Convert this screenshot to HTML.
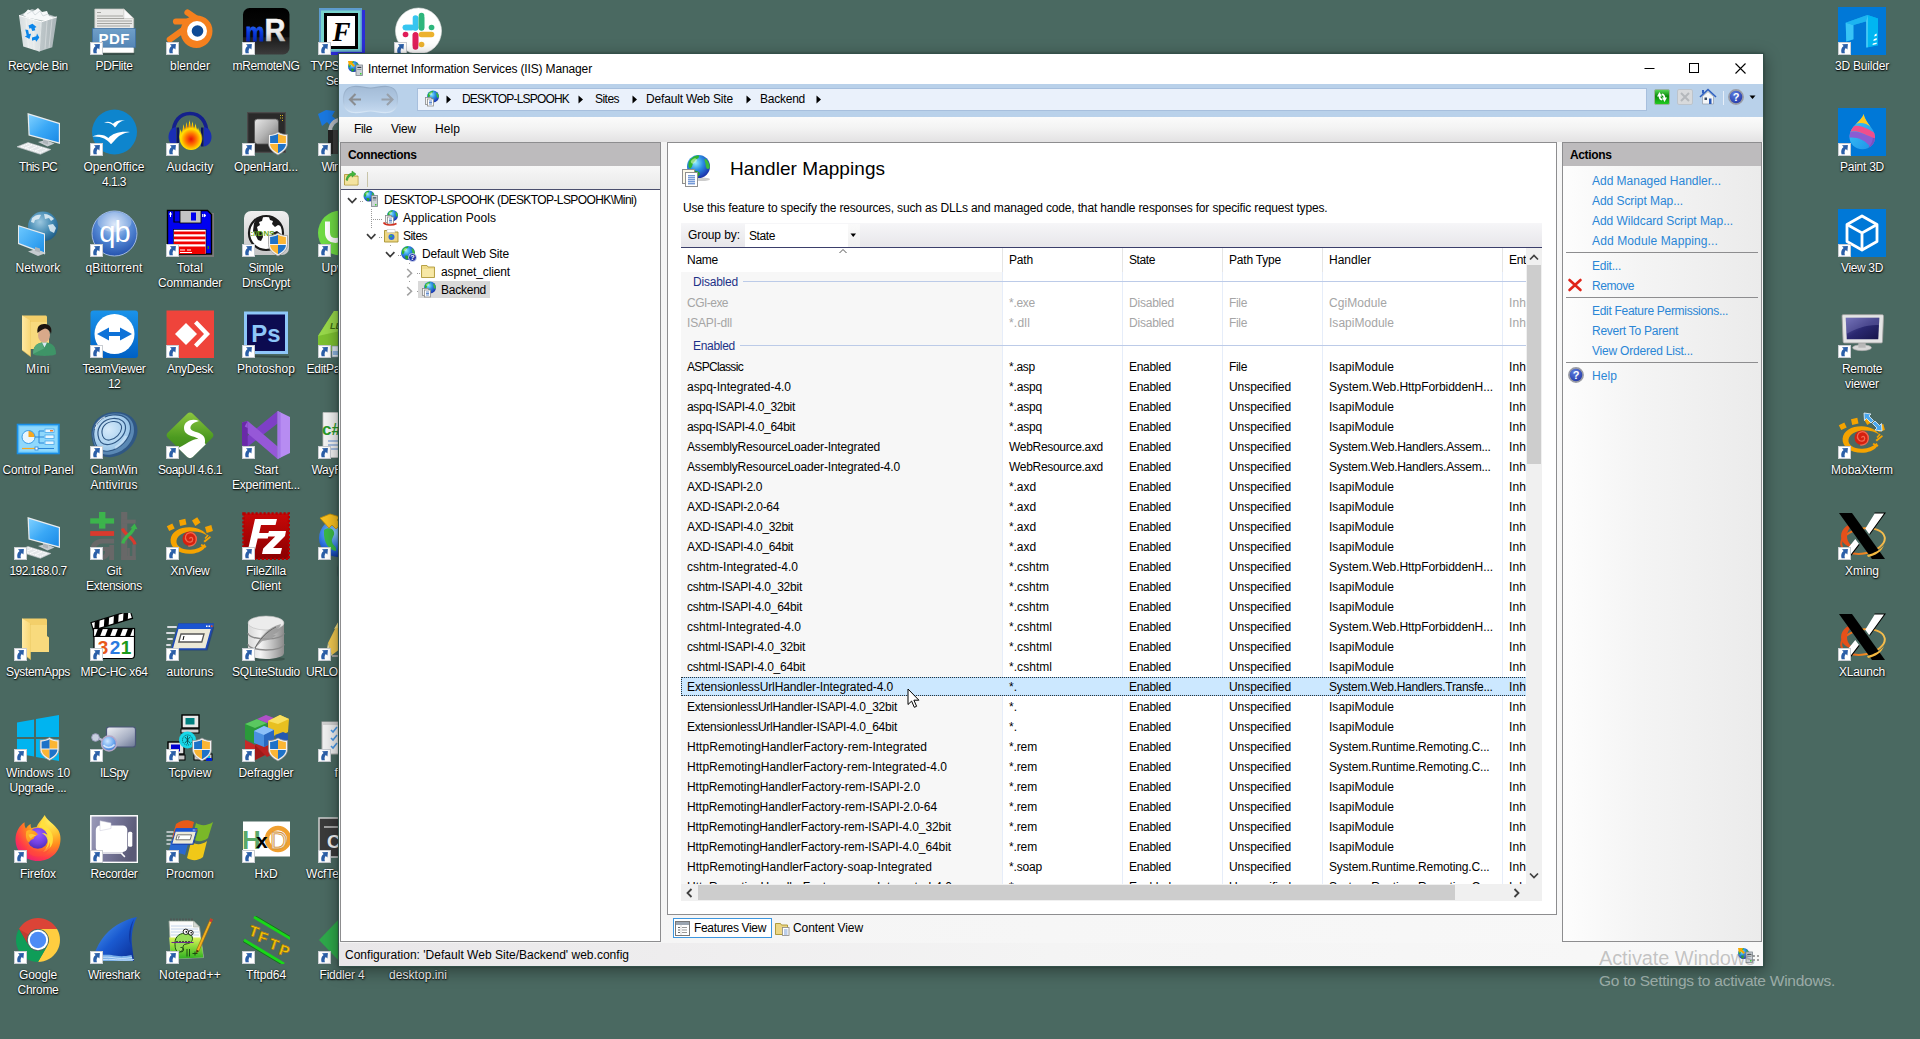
<!DOCTYPE html>
<html lang="en"><head><meta charset="utf-8"><title>Internet Information Services (IIS) Manager</title>
<style>
html,body{margin:0;padding:0;}
body{width:1920px;height:1039px;overflow:hidden;background:#4a6961;font-family:"Liberation Sans",sans-serif;font-size:12px;color:#000;}
#screen{position:relative;width:1920px;height:1039px;overflow:hidden;background:#4a6961;}
.t{position:absolute;white-space:nowrap;line-height:16px;}
.lbl{position:absolute;width:120px;text-align:center;color:#fff;line-height:15px;text-shadow:0 1px 1px rgba(0,0,0,.75),0 0 2px rgba(0,0,0,.55),1px 1px 2px rgba(0,0,0,.5);white-space:nowrap;}
.a{color:#2a86d6;}
.dis{color:#a9a9a9;}

</style></head>
<body>
<div id="screen">
<svg width="0" height="0" style="position:absolute"><defs><radialGradient id="gl16" cx=".38" cy=".34" r=".75"><stop offset="0" stop-color="#8aeaff"/><stop offset=".42" stop-color="#2c8ee2"/><stop offset=".85" stop-color="#1c3cb4"/><stop offset="1" stop-color="#16288a"/></radialGradient></defs></svg>
<svg style="position:absolute;left:14px;top:7px;overflow:hidden" width="48" height="48" viewBox="0 0 48 48"><defs><linearGradient id="rb1" x1="0" y1="0" x2="1" y2="0"><stop offset="0" stop-color="#dfe4e7"/><stop offset=".5" stop-color="#f3f5f6"/><stop offset="1" stop-color="#e2e6e9"/></linearGradient>
<linearGradient id="rb2" x1="0" y1="0" x2="1" y2="0"><stop offset="0" stop-color="#cdd3d7"/><stop offset="1" stop-color="#b4bcc1"/></linearGradient></defs>
<path d="M5 8.500L18 2l24.900 7.900-15.600 5z" fill="#c4ccd0" opacity=".8"/>
<path d="M9 8l5-5.500 5 2L24 1l4 4 5-1 2 5 5 1-8 4-9-1.500-10-2z" fill="#f7f9fa"/><path d="M13 7l5-3 3 4 5-4 3 5 5-2" fill="none" stroke="#d3d9dd" stroke-width=".9"/>
<path d="M27.300 14.800L42.900 9.900 38.300 40.300 25.200 44.600z" fill="url(#rb2)" opacity=".9"/>
<path d="M5 8.500l22.300 6.300-2.100 29.800L9.200 39.600z" fill="url(#rb1)" opacity=".94"/>
<path d="M5 8.500l22.300 6.300L42.900 9.900" fill="none" stroke="#fff" stroke-width="1"/><path d="M27.300 14.800l-2.100 29.800" stroke="#eef1f2" stroke-width=".8"/>
<path d="M12 12l2.500 29M19.500 14l.5 29M33 14l-2 28M38 12l-3 29" stroke="#fff" stroke-opacity=".5" stroke-width=".7"/>
<g fill="#0c86ea"><path d="M14.500 18.500l4-1.800 4 3.300-1.800 1 .6 2.200-3 .8-1.200-3-1.600.8z"/><path d="M11.300 22.500l2.800.6.800 3.800 2.200-.2-1.700 5.200-4.500-2.500 1.800-.8z"/><path d="M18 30.500l4.300-1.300.7-2.800 2.300 4.200-3 4.200-1-2-3.300 1z"/></g></svg>
<div class="lbl" style="left:-22px;top:59px;width:120px"><span style="letter-spacing:-0.305px">Recycle Bin</span></div>
<svg style="position:absolute;left:90px;top:7px;overflow:hidden" width="48" height="48" viewBox="0 0 48 48"><defs><linearGradient id="pd1" x1="0" y1="0" x2="0" y2="1"><stop offset="0" stop-color="#6f9fc8"/><stop offset="1" stop-color="#5586b6"/></linearGradient></defs>
<path d="M6 47.200l38.500-.4" stroke="#000" stroke-opacity=".28" stroke-width="2"/>
<path d="M4.800 2h29l9.900 9.500v34.100H4.800z" fill="#e9e9e7" stroke="#c4c4c0" stroke-width=".7"/>
<path d="M33.800 2v9.500h9.900z" fill="#fafafa" stroke="#bdbdb8" stroke-width=".6"/>
<g stroke="#a4a4a0" stroke-width="1"><path d="M7 5.500h4M7 9h26M7 11.500h27M7 14h35M7 16.500h35M7 19h33"/></g>
<rect x="2.600" y="21.600" width="42.900" height="18.700" fill="url(#pd1)" stroke="#3f72a6" stroke-width=".8"/>
<rect x="5.200" y="40.700" width="38.200" height="4.700" fill="#fff"/>
<text x="24.200" y="36.800" font-family="Liberation Sans,sans-serif" font-weight="bold" font-size="15" fill="#fff" text-anchor="middle" letter-spacing=".5">PDF</text></svg>
<svg style="position:absolute;left:90px;top:42px" width="13" height="13" viewBox="0 0 13 13"><rect x=".5" y=".5" width="12" height="12" fill="#fff" stroke="#c9cdd2"/><path d="M9.900 1.900l-.5 5.700-1.600-1.600C6.600 7.200 6.300 9 6.900 11.200H3.600C2.600 8 3.500 5.300 5.600 3.900L4 2.300z" fill="#2b5fa8"/></svg>
<div class="lbl" style="left:54px;top:59px;width:120px"><span style="letter-spacing:-0.334px">PDFlite</span></div>
<svg style="position:absolute;left:166px;top:7px;overflow:hidden" width="48" height="48" viewBox="0 0 48 48"><g fill="none" stroke="#f5801e" stroke-linecap="round" stroke-width="6.200"><path d="M10 14.500h18"/><path d="M21.500 5.500L34 14"/><path d="M3.800 32.500L24 18"/></g>
<path d="M30.500 8.500c9 0 16 6.500 16 15.500S39.500 41 30.500 41 14.500 33.500 14.500 24.500s7-16 16-16z" fill="#f5801e"/>
<circle cx="31" cy="24" r="10" fill="#fff"/><circle cx="31.500" cy="24" r="5.800" fill="#0d4a96"/></svg>
<svg style="position:absolute;left:166px;top:42px" width="13" height="13" viewBox="0 0 13 13"><rect x=".5" y=".5" width="12" height="12" fill="#fff" stroke="#c9cdd2"/><path d="M9.900 1.900l-.5 5.700-1.600-1.600C6.600 7.200 6.300 9 6.900 11.200H3.600C2.600 8 3.500 5.300 5.600 3.900L4 2.300z" fill="#2b5fa8"/></svg>
<div class="lbl" style="left:130px;top:59px;width:120px"><span style="letter-spacing:-0.004px">blender</span></div>
<svg style="position:absolute;left:242px;top:7px;overflow:hidden" width="48" height="48" viewBox="0 0 48 48"><defs><linearGradient id="mr1" x1="0" y1="0" x2="0" y2="1"><stop offset="0" stop-color="#000"/><stop offset=".62" stop-color="#0a0a0a"/><stop offset=".64" stop-color="#1c1c1c"/><stop offset="1" stop-color="#3c3c3c"/></linearGradient>
<linearGradient id="mr2" x1="0" y1="0" x2="0" y2="1"><stop offset="0" stop-color="#4d8dff"/><stop offset=".5" stop-color="#0a3ee0"/><stop offset="1" stop-color="#001a9c"/></linearGradient>
<linearGradient id="mr3" x1="0" y1="0" x2="0" y2="1"><stop offset="0" stop-color="#fff"/><stop offset=".6" stop-color="#e8e8e8"/><stop offset="1" stop-color="#8a8a8a"/></linearGradient></defs>
<rect x="1" y="1" width="46.500" height="46.500" rx="6.500" fill="url(#mr1)"/>
<text x="3.500" y="34" font-family="Liberation Sans,sans-serif" font-weight="bold" font-size="25" fill="url(#mr2)" stroke="url(#mr2)" stroke-width=".8" textLength="19" lengthAdjust="spacingAndGlyphs">m</text>
<text x="22.500" y="34" font-family="Liberation Sans,sans-serif" font-weight="bold" font-size="32" fill="url(#mr3)" stroke="url(#mr3)" stroke-width=".5" textLength="21" lengthAdjust="spacingAndGlyphs">R</text></svg>
<svg style="position:absolute;left:242px;top:42px" width="13" height="13" viewBox="0 0 13 13"><rect x=".5" y=".5" width="12" height="12" fill="#fff" stroke="#c9cdd2"/><path d="M9.900 1.900l-.5 5.700-1.600-1.600C6.600 7.200 6.300 9 6.900 11.200H3.600C2.600 8 3.500 5.300 5.600 3.900L4 2.300z" fill="#2b5fa8"/></svg>
<div class="lbl" style="left:206px;top:59px;width:120px"><span style="letter-spacing:-0.335px">mRemoteNG</span></div>
<svg style="position:absolute;left:318px;top:7px;overflow:hidden" width="48" height="48" viewBox="0 0 48 48"><rect x="4" y="3" width="43" height="45" fill="#2c2cd8"/><rect x="1" y="1" width="43" height="44" fill="#5d9bcf"/><rect x="3" y="3.500" width="39.500" height="40" fill="#78d4cc"/>
<rect x="7.500" y="7.500" width="31" height="33" fill="#fff" stroke="#000" stroke-width="3"/>
<text x="23.500" y="34" font-family="Liberation Serif,serif" font-style="italic" font-weight="bold" font-size="27" fill="#000" text-anchor="middle">F</text></svg>
<svg style="position:absolute;left:318px;top:42px" width="13" height="13" viewBox="0 0 13 13"><rect x=".5" y=".5" width="12" height="12" fill="#fff" stroke="#c9cdd2"/><path d="M9.900 1.900l-.5 5.700-1.600-1.600C6.600 7.200 6.300 9 6.900 11.200H3.600C2.600 8 3.500 5.300 5.600 3.900L4 2.300z" fill="#2b5fa8"/></svg>
<div class="lbl" style="left:282px;top:59px;width:120px"><span style="letter-spacing:-0.698px">TYPSoft FTP</span><br><span style="letter-spacing:-0.557px">Server</span></div>
<svg style="position:absolute;left:394px;top:7px;overflow:hidden" width="48" height="48" viewBox="0 0 48 48"><circle cx="24.500" cy="24" r="23" fill="#fff"/><circle cx="24.500" cy="24" r="23" fill="none" stroke="#e8e8e8" stroke-width=".6"/>
<g stroke-linecap="round" stroke-width="5.600" fill="none"><path d="M21.500 11v10" stroke="#36c5f0"/><path d="M11.500 20.500h6" stroke="#36c5f0"/><path d="M11.500 20.500h10" stroke="#36c5f0"/>
<path d="M27.500 11v10" stroke="#2eb67d"/><path d="M37.500 20.500h.1" stroke="#2eb67d"/><path d="M27.500 8.500v12" stroke="#2eb67d"/>
<path d="M21.500 28v10" stroke="#e01e5a"/><path d="M11.500 27.500h.1" stroke="#e01e5a"/><path d="M21.500 28v12" stroke="#e01e5a"/>
<path d="M27.500 27.500h10" stroke="#ecb22e"/><path d="M27.500 37.500h.1" stroke="#ecb22e"/></g></svg>
<svg style="position:absolute;left:394px;top:42px" width="13" height="13" viewBox="0 0 13 13"><rect x=".5" y=".5" width="12" height="12" fill="#fff" stroke="#c9cdd2"/><path d="M9.900 1.900l-.5 5.700-1.600-1.600C6.600 7.200 6.300 9 6.900 11.200H3.600C2.600 8 3.500 5.300 5.600 3.900L4 2.300z" fill="#2b5fa8"/></svg>
<div class="lbl" style="left:358px;top:59px;width:120px"><span style="letter-spacing:-0.469px">Slack</span></div>
<svg style="position:absolute;left:14px;top:108px;overflow:hidden" width="48" height="48" viewBox="0 0 48 48"><defs><linearGradient id="pca" x1="0" y1="0" x2="1" y2="1"><stop offset="0" stop-color="#7fd0ff"/><stop offset=".5" stop-color="#3aa8f6"/><stop offset="1" stop-color="#1b8ae6"/></linearGradient></defs>
<path d="M3 38.800l11-4.300 22.800 7L26.400 46.300z" fill="#e4e7e9" stroke="#c9cdd0" stroke-width=".6"/>
<path d="M7 38.600l7.500-3 18.500 5.700-7 3.200z" fill="none" stroke="#fff" stroke-width=".9" stroke-dasharray="1.600 1"/><path d="M11 40l7-3M16 41.500l7-3.200M21 43l7-3.300" stroke="#fff" stroke-width=".8"/>
<path d="M24 34l8-2 8.500 3.500-7 3z" fill="#c6cbcf"/><path d="M29 29l5 1.500v6l-5-1.500z" fill="#aeb4b9"/>
<path d="M13.500 5l32.500 10v21L14.500 27.500z" fill="#e9ecee"/><path d="M14.800 6.800l30 9.300v18.200L15.700 26.500z" fill="url(#pca)"/></svg>
<div class="lbl" style="left:-22px;top:160px;width:120px"><span style="letter-spacing:-0.668px">This PC</span></div>
<svg style="position:absolute;left:90px;top:108px;overflow:hidden" width="48" height="48" viewBox="0 0 48 48"><circle cx="24.500" cy="24" r="22.500" fill="#0e85cd"/>
<path d="M14 15c3-2.200 6.500-1.500 9 .8 2-2.600 6-4.200 12-3.500-3.500.5-6.500 2.300-8.500 5.500l-1.500 1.700c-2.500-3.700-6-5.200-11-4.500z" fill="#fff"/>
<path d="M2.500 28.500c5.500-3 12-2 16 1.500 4-4.500 11-7 21.500-6-7 1-12 4-15.500 8.500l-3.500 3.800c-4-5.500-10-8.300-18.500-7.800z" fill="#fff"/></svg>
<svg style="position:absolute;left:90px;top:143px" width="13" height="13" viewBox="0 0 13 13"><rect x=".5" y=".5" width="12" height="12" fill="#fff" stroke="#c9cdd2"/><path d="M9.900 1.900l-.5 5.700-1.600-1.600C6.600 7.200 6.300 9 6.900 11.200H3.600C2.600 8 3.500 5.300 5.600 3.900L4 2.300z" fill="#2b5fa8"/></svg>
<div class="lbl" style="left:54px;top:160px;width:120px"><span style="letter-spacing:0.052px">OpenOffice</span><br><span style="letter-spacing:-0.538px">4.1.3</span></div>
<svg style="position:absolute;left:166px;top:108px;overflow:hidden" width="48" height="48" viewBox="0 0 48 48"><defs><radialGradient id="au1" cx=".5" cy=".55" r=".55"><stop offset="0" stop-color="#e81008"/><stop offset=".45" stop-color="#ff7a00"/><stop offset=".8" stop-color="#ffe000"/><stop offset="1" stop-color="#ffe000" stop-opacity=".0"/></radialGradient></defs>
<path d="M7 27C7 13 14 5.500 24 5.500S41 13 41 27" fill="none" stroke="#14208c" stroke-width="3.600"/>
<path d="M10 19c-5 1-7.500 5-7.500 10s3 9 8 9.500z" fill="#1a2eb4"/><path d="M38 19c5 1 7.500 5 7.500 10s-3 9-8 9.500z" fill="#1a2eb4"/>
<path d="M10.500 19.500h2.500v19h-2.500zM35 19.500h2.500v19H35z" fill="#0a1460"/>
<path d="M13 29l1.500-8 1.500 5 1.500-10 1.500 7 1.500-9 1.500 8 1.500-11 1.500 10 1.500-8 1.500 9 1.500-7 1.500 8 1.500-4 1 10-1 7-1.500-4-1.500 6-1.500-5-1.500 6-1.500-6-1.500 7-1.500-7-1.500 6-1.500-6-1.500 5-1.500-6-1.500 3z" fill="url(#au1)"/>
<ellipse cx="25" cy="30" rx="11.500" ry="12" fill="url(#au1)"/></svg>
<svg style="position:absolute;left:166px;top:143px" width="13" height="13" viewBox="0 0 13 13"><rect x=".5" y=".5" width="12" height="12" fill="#fff" stroke="#c9cdd2"/><path d="M9.900 1.900l-.5 5.700-1.600-1.600C6.600 7.200 6.300 9 6.900 11.200H3.600C2.600 8 3.500 5.300 5.600 3.900L4 2.300z" fill="#2b5fa8"/></svg>
<div class="lbl" style="left:130px;top:160px;width:120px"><span style="letter-spacing:0.122px">Audacity</span></div>
<svg style="position:absolute;left:242px;top:108px;overflow:hidden" width="48" height="48" viewBox="0 0 48 48"><defs><linearGradient id="oh1" x1="0" y1="0" x2="1" y2="1"><stop offset="0" stop-color="#e8e8e8"/><stop offset=".5" stop-color="#b4b4b4"/><stop offset="1" stop-color="#6e6e6e"/></linearGradient></defs>
<rect x="5.500" y="4.500" width="38" height="40" fill="#333" stroke="#4a4a4a" stroke-width="1"/><rect x="7" y="6" width="35" height="37" fill="#2a2a2a"/>
<rect x="12.500" y="11" width="24" height="25" rx="3" fill="url(#oh1)" stroke="#555" stroke-width=".8"/>
<g fill="#d8b820"><rect x="38" y="7" width="1" height="1"/><rect x="40" y="7" width="1" height="1"/><rect x="38" y="9.500" width="1" height="1"/><rect x="40" y="9.500" width="1" height="1"/><rect x="40" y="12" width="1" height="1"/></g><g transform="translate(26,24)"><path d="M10 0c3 2 6 2.500 9.500 2.500v9c0 5-4 8.500-9.500 11.500C4.500 20 .5 16.500.5 11.500v-9C4 2.500 7 2 10 0z" fill="#f2f2f2" stroke="#8c8c8c" stroke-width=".7"/><path d="M10 1.800c2.600 1.600 5.200 2 7.900 2.100V11H10z" fill="#fbb534"/><path d="M10 1.800C7.400 3.400 4.800 3.800 2.100 3.900V11H10z" fill="#1e72c8"/><path d="M2.100 12h7.900v9.200C5.600 18.700 2.300 16 2.100 12z" fill="#fbb534"/><path d="M17.900 12H10v9.200c4.400-2.500 7.700-5.200 7.900-9.200z" fill="#1e72c8"/></g></svg>
<svg style="position:absolute;left:242px;top:143px" width="13" height="13" viewBox="0 0 13 13"><rect x=".5" y=".5" width="12" height="12" fill="#fff" stroke="#c9cdd2"/><path d="M9.900 1.900l-.5 5.700-1.600-1.600C6.600 7.200 6.300 9 6.900 11.200H3.600C2.600 8 3.500 5.300 5.600 3.900L4 2.300z" fill="#2b5fa8"/></svg>
<div class="lbl" style="left:206px;top:160px;width:120px"><span style="letter-spacing:-0.124px">OpenHard...</span></div>
<svg style="position:absolute;left:318px;top:108px;overflow:hidden" width="48" height="48" viewBox="0 0 48 48"><path d="M0 6l8-4 9 1-3 5 6 5-6 6-5-5-5 4z" fill="#1a78e0"/><path d="M12 24c0-8 5-12 10-12" fill="none" stroke="#b8bcc0" stroke-width="4"/>
<rect x="10" y="22" width="14" height="24" rx="2" fill="#3a3a3a"/><rect x="10" y="22" width="5" height="24" fill="#222"/></svg>
<svg style="position:absolute;left:318px;top:143px" width="13" height="13" viewBox="0 0 13 13"><rect x=".5" y=".5" width="12" height="12" fill="#fff" stroke="#c9cdd2"/><path d="M9.900 1.900l-.5 5.700-1.600-1.600C6.600 7.200 6.300 9 6.900 11.200H3.600C2.600 8 3.500 5.300 5.600 3.900L4 2.300z" fill="#2b5fa8"/></svg>
<div class="lbl" style="left:282px;top:160px;width:120px"><span style="letter-spacing:-0.723px">WinSCP</span></div>
<svg style="position:absolute;left:14px;top:209px;overflow:hidden" width="48" height="48" viewBox="0 0 48 48"><defs><radialGradient id="nw1" cx=".4" cy=".35" r=".7"><stop offset="0" stop-color="#9cc8e0"/><stop offset=".6" stop-color="#3f86b0"/><stop offset="1" stop-color="#1e5a84"/></radialGradient>
<linearGradient id="nw2" x1="0" y1="0" x2="1" y2="1"><stop offset="0" stop-color="#6cc8ff"/><stop offset="1" stop-color="#1c90ea"/></linearGradient></defs>
<circle cx="29" cy="17.500" r="15" fill="url(#nw1)"/>
<path d="M18 9c3-3 7-4 9-3l-2 4-4 1-1 3-3-1zM30 5c4 0 8 2 10 5l-3 2-2-3-4 1zM34 16l5-1 3 4-2 5-4-2z" fill="#e4f0f6" opacity=".85"/>
<path d="M4 16l27 8.500v21L4 35z" fill="#e6eaed"/><path d="M5 17.500l25 8v18L5 34z" fill="url(#nw2)"/>
<path d="M14 42.500l8-2.500 10 4-8 3z" fill="#c6cbcf"/><path d="M21 38l5 1.500v4L21 42z" fill="#aeb4b9"/></svg>
<div class="lbl" style="left:-22px;top:261px;width:120px"><span style="letter-spacing:0.141px">Network</span></div>
<svg style="position:absolute;left:90px;top:209px;overflow:hidden" width="48" height="48" viewBox="0 0 48 48"><defs><radialGradient id="qb1" cx=".5" cy=".3" r=".75"><stop offset="0" stop-color="#cfe0f8"/><stop offset=".45" stop-color="#5b8fd8"/><stop offset="1" stop-color="#1d4aa8"/></radialGradient></defs>
<circle cx="24.500" cy="24.500" r="22.500" fill="url(#qb1)" stroke="#9fb8e0" stroke-width="1"/>
<ellipse cx="24.500" cy="13" rx="17" ry="10" fill="#fff" opacity=".28"/>
<text x="24.500" y="33" font-family="Liberation Sans,sans-serif" font-size="29" fill="#fff" text-anchor="middle" letter-spacing="-1">qb</text></svg>
<svg style="position:absolute;left:90px;top:244px" width="13" height="13" viewBox="0 0 13 13"><rect x=".5" y=".5" width="12" height="12" fill="#fff" stroke="#c9cdd2"/><path d="M9.900 1.900l-.5 5.700-1.600-1.600C6.600 7.200 6.300 9 6.900 11.200H3.600C2.600 8 3.500 5.300 5.600 3.900L4 2.300z" fill="#2b5fa8"/></svg>
<div class="lbl" style="left:54px;top:261px;width:120px"><span style="letter-spacing:0.149px">qBittorrent</span></div>
<svg style="position:absolute;left:166px;top:209px;overflow:hidden" width="48" height="48" viewBox="0 0 48 48"><rect x="5" y="4" width="43" height="44" fill="#7a7a7a"/><path d="M1.500 1.500h40l4 4v39.500h-44z" fill="#0000f0" stroke="#000" stroke-width="1.400"/>
<rect x="14" y="1.500" width="21" height="12.500" fill="#c4c4c4" stroke="#000" stroke-width=".8"/><rect x="25" y="3.500" width="5" height="8" fill="#0000f0"/>
<path d="M8 2v11h6" fill="none" stroke="#000" stroke-width="1.200"/><path d="M4.500 3v5M3 5h3" stroke="#fff" stroke-width="1"/><path d="M36.500 5v3M38 5v3l2-1.500z" stroke="#fff" fill="#fff" stroke-width=".8"/>
<rect x="7.500" y="20.500" width="32.500" height="24.500" fill="#fff" stroke="#000" stroke-width=".6"/>
<g fill="#f00000"><rect x="8" y="22.500" width="31.500" height="2.800"/><rect x="8" y="27.500" width="31.500" height="2.800"/><rect x="8" y="32.500" width="31.500" height="2.800"/><rect x="8" y="37.500" width="31.500" height="7.500"/></g>
<path d="M14 41h5M21 41h4M14 43.500h12" stroke="#fff" stroke-width="1"/><rect x="41.500" y="37" width="1.500" height="3" fill="#208020"/></svg>
<svg style="position:absolute;left:166px;top:244px" width="13" height="13" viewBox="0 0 13 13"><rect x=".5" y=".5" width="12" height="12" fill="#fff" stroke="#c9cdd2"/><path d="M9.900 1.900l-.5 5.700-1.600-1.600C6.600 7.200 6.300 9 6.900 11.200H3.600C2.600 8 3.500 5.300 5.600 3.900L4 2.300z" fill="#2b5fa8"/></svg>
<div class="lbl" style="left:130px;top:261px;width:120px"><span style="letter-spacing:0.13px">Total</span><br><span style="letter-spacing:-0.225px">Commander</span></div>
<svg style="position:absolute;left:242px;top:209px;overflow:hidden" width="48" height="48" viewBox="0 0 48 48"><defs><linearGradient id="dc1" x1="0" y1="0" x2="0" y2="1"><stop offset="0" stop-color="#f0f0f0"/><stop offset="1" stop-color="#c4c4c4"/></linearGradient></defs>
<rect x="2" y="2" width="45" height="44" rx="7" fill="url(#dc1)"/>
<circle cx="24" cy="24" r="17" fill="#fff" stroke="#1a1a1a" stroke-width="2.200"/>
<path d="M12 14c2-4 6-6 9-6l-1 4-3 1 1 3-3 2 1 4 4 1 1 5-2 4-3-1-3-6-2-3zM27 8c5 0 10 4 12 9l-3-1-3 2-3-3 1-3-3-1zM30 24l5-2 4 3-2 8-5 3-1-5-2-3z" fill="#1a1a1a"/>
<text x="20.500" y="27" font-family="Liberation Sans,sans-serif" font-weight="bold" font-size="8" fill="#6aa820" text-anchor="middle">://DNS</text><g transform="translate(26,24)"><path d="M10 0c3 2 6 2.500 9.500 2.500v9c0 5-4 8.500-9.500 11.500C4.500 20 .5 16.500.5 11.500v-9C4 2.500 7 2 10 0z" fill="#f2f2f2" stroke="#8c8c8c" stroke-width=".7"/><path d="M10 1.800c2.600 1.600 5.200 2 7.900 2.100V11H10z" fill="#fbb534"/><path d="M10 1.800C7.400 3.400 4.800 3.800 2.100 3.900V11H10z" fill="#1e72c8"/><path d="M2.100 12h7.900v9.200C5.600 18.700 2.300 16 2.100 12z" fill="#fbb534"/><path d="M17.900 12H10v9.200c4.400-2.500 7.700-5.200 7.900-9.200z" fill="#1e72c8"/></g></svg>
<svg style="position:absolute;left:242px;top:244px" width="13" height="13" viewBox="0 0 13 13"><rect x=".5" y=".5" width="12" height="12" fill="#fff" stroke="#c9cdd2"/><path d="M9.900 1.900l-.5 5.700-1.600-1.600C6.600 7.200 6.300 9 6.900 11.200H3.600C2.600 8 3.500 5.300 5.600 3.900L4 2.300z" fill="#2b5fa8"/></svg>
<div class="lbl" style="left:206px;top:261px;width:120px"><span style="letter-spacing:-0.28px">Simple</span><br><span style="letter-spacing:-0.251px">DnsCrypt</span></div>
<svg style="position:absolute;left:318px;top:209px;overflow:hidden" width="48" height="48" viewBox="0 0 48 48"><circle cx="22.500" cy="24" r="22.500" fill="#6fda44"/><path d="M9.500 12.500v11c0 5 3.200 8 8 8s8-3 8-8v-11" fill="none" stroke="#fff" stroke-width="5"/></svg>
<svg style="position:absolute;left:318px;top:244px" width="13" height="13" viewBox="0 0 13 13"><rect x=".5" y=".5" width="12" height="12" fill="#fff" stroke="#c9cdd2"/><path d="M9.900 1.900l-.5 5.700-1.600-1.600C6.600 7.200 6.300 9 6.900 11.200H3.600C2.600 8 3.500 5.300 5.600 3.900L4 2.300z" fill="#2b5fa8"/></svg>
<div class="lbl" style="left:282px;top:261px;width:120px"><span style="letter-spacing:0.054px">Upwork</span></div>
<svg style="position:absolute;left:14px;top:310px;overflow:hidden" width="48" height="48" viewBox="0 0 48 48"><defs><linearGradient id="foa" x1="0" y1="0" x2="1" y2="0"><stop offset="0" stop-color="#ffe9a2"/><stop offset="1" stop-color="#f8d775"/></linearGradient></defs>
<path d="M8 5.500h23.500c.8 0 1.500.7 1.500 1.500v16l2 1.500V39H8z" fill="#f3cf6a"/>
<path d="M8 5.500l8.500 5v36L8 40z" fill="url(#foa)"/><path d="M16.500 10.500v36L8 40" fill="none" stroke="#e6c25a" stroke-width=".6"/>
<path d="M16.500 12H33v11.500l2 1.500V39H16.500z" fill="#f8da80" opacity=".9"/><path d="M19 44c0-7 3-10.500 9-11.500h5c6 1 9 4.500 9 11.500-2 2.500-21 2.500-23 0z" fill="#3e9467"/><path d="M19 44c0-7 3-10.500 9-11.500l2 6z" fill="#55a87a"/>
<path d="M28 32.500l2.500 5 2.500-5z" fill="#d8e8f0"/><ellipse cx="30" cy="25" rx="6" ry="7.500" fill="#d8a98a"/><path d="M23.500 23c-1-7 3-9.500 7.500-9 5 .5 7.500 4 6 10-1-3.500-3-5-6-5.500-2.500 1-5 2-7.500 4.500z" fill="#1c1410"/></svg>
<div class="lbl" style="left:-22px;top:362px;width:120px"><span style="letter-spacing:0.5px">Mini</span></div>
<svg style="position:absolute;left:90px;top:310px;overflow:hidden" width="48" height="48" viewBox="0 0 48 48"><defs><linearGradient id="tv1" x1="0" y1="0" x2="0" y2="1"><stop offset="0" stop-color="#1a93ea"/><stop offset="1" stop-color="#0060c4"/></linearGradient></defs>
<rect x=".5" y=".5" width="47.500" height="47.500" rx="3" fill="url(#tv1)"/><circle cx="24.500" cy="24" r="20" fill="#fff"/>
<path d="M7 24l12-6.500v4.500h11v-4.500L42 24l-12 6.500V26H19v4.500z" fill="#0e72d8"/></svg>
<svg style="position:absolute;left:90px;top:345px" width="13" height="13" viewBox="0 0 13 13"><rect x=".5" y=".5" width="12" height="12" fill="#fff" stroke="#c9cdd2"/><path d="M9.900 1.900l-.5 5.700-1.600-1.600C6.600 7.200 6.300 9 6.900 11.200H3.600C2.600 8 3.500 5.300 5.600 3.900L4 2.300z" fill="#2b5fa8"/></svg>
<div class="lbl" style="left:54px;top:362px;width:120px"><span style="letter-spacing:-0.281px">TeamViewer</span><br><span style="letter-spacing:-0.674px">12</span></div>
<svg style="position:absolute;left:166px;top:310px;overflow:hidden" width="48" height="48" viewBox="0 0 48 48"><rect x=".5" y=".5" width="47.500" height="47.500" fill="#ef443b"/><path d="M20 13l11 11-11 11L9 24z" fill="#fff"/><path d="M28 13.500l3-3 13 13.500-13 13.500-3-3L38 24z" fill="#fff"/></svg>
<svg style="position:absolute;left:166px;top:345px" width="13" height="13" viewBox="0 0 13 13"><rect x=".5" y=".5" width="12" height="12" fill="#fff" stroke="#c9cdd2"/><path d="M9.900 1.900l-.5 5.700-1.600-1.600C6.600 7.200 6.300 9 6.900 11.200H3.600C2.600 8 3.500 5.300 5.600 3.900L4 2.300z" fill="#2b5fa8"/></svg>
<div class="lbl" style="left:130px;top:362px;width:120px"><span style="letter-spacing:-0.288px">AnyDesk</span></div>
<svg style="position:absolute;left:242px;top:310px;overflow:hidden" width="48" height="48" viewBox="0 0 48 48"><path d="M3 46l44 1" stroke="#000" stroke-opacity=".3" stroke-width="2"/><rect x="2" y="1.500" width="44" height="42.500" fill="#8ec6f8"/><rect x="5" y="4.500" width="38" height="36.500" fill="#0c0b50"/>
<text x="24" y="32" font-family="Liberation Sans,sans-serif" font-weight="bold" font-size="24" fill="#8ec6f8" text-anchor="middle">Ps</text></svg>
<svg style="position:absolute;left:242px;top:345px" width="13" height="13" viewBox="0 0 13 13"><rect x=".5" y=".5" width="12" height="12" fill="#fff" stroke="#c9cdd2"/><path d="M9.900 1.900l-.5 5.700-1.600-1.600C6.600 7.200 6.300 9 6.900 11.200H3.600C2.600 8 3.500 5.300 5.600 3.900L4 2.300z" fill="#2b5fa8"/></svg>
<div class="lbl" style="left:206px;top:362px;width:120px"><span style="letter-spacing:0.069px">Photoshop</span></div>
<svg style="position:absolute;left:318px;top:310px;overflow:hidden" width="48" height="48" viewBox="0 0 48 48"><path d="M0 26L16 1h6v40H2c-2 0-3-2-2-4z" fill="#7cc030"/><path d="M0 26L16 1h6v20z" fill="#98d84a"/><text x="12" y="19" font-family="Liberation Sans,sans-serif" font-style="italic" font-weight="bold" font-size="9" fill="#3a6a10">LL</text>
<rect x="14" y="36" width="8" height="11" fill="#e0e8f0" stroke="#8090a0" stroke-width=".6"/><path d="M15 42h7M15 44h7" stroke="#3a80d0" stroke-width="1"/></svg>
<svg style="position:absolute;left:318px;top:345px" width="13" height="13" viewBox="0 0 13 13"><rect x=".5" y=".5" width="12" height="12" fill="#fff" stroke="#c9cdd2"/><path d="M9.900 1.900l-.5 5.700-1.600-1.600C6.600 7.200 6.300 9 6.900 11.200H3.600C2.600 8 3.500 5.300 5.600 3.900L4 2.300z" fill="#2b5fa8"/></svg>
<div class="lbl" style="left:282px;top:362px;width:120px"><span style="letter-spacing:-0.266px">EditPad Lite 7</span></div>
<svg style="position:absolute;left:14px;top:411px;overflow:hidden" width="48" height="48" viewBox="0 0 48 48"><rect x="3.500" y="13.500" width="41.500" height="29" fill="#6cc8fa" stroke="#1a8ee6" stroke-width="1.600"/><rect x="5.500" y="15.500" width="37.500" height="25" fill="#8fd8fc"/>
<circle cx="14.500" cy="26" r="6.500" fill="#e8f6fe"/><path d="M14.500 26v-6.500a6.500 6.500 0 0 1 6.500 6.500z" fill="#f6a820"/><circle cx="14.500" cy="26" r="6.500" fill="none" stroke="#3a9ee8" stroke-width="1"/>
<path d="M21 26h4v-6h5M25 26h5M25 26v6h5" fill="none" stroke="#2a86d8" stroke-width="1"/>
<g fill="#e8f6fe" stroke="#3a9ee8" stroke-width=".7"><rect x="31" y="18" width="9" height="3.500"/><rect x="31" y="24" width="9" height="3.500"/><rect x="31" y="30" width="9" height="3.500"/></g><rect x="36" y="19" width="3" height="1.500" fill="#f08030"/>
<path d="M8 37.500h14" stroke="#f6a820" stroke-width="1.200"/><path d="M23 37.500h17" stroke="#2a86d8" stroke-width="1"/><rect x="21" y="36" width="3" height="3" fill="#fff" stroke="#2a86d8" stroke-width=".8"/></svg>
<div class="lbl" style="left:-22px;top:463px;width:120px"><span style="letter-spacing:-0.131px">Control Panel</span></div>
<svg style="position:absolute;left:90px;top:411px;overflow:hidden" width="48" height="48" viewBox="0 0 48 48"><defs><radialGradient id="cw1" cx=".4" cy=".4" r=".75"><stop offset="0" stop-color="#d6eafa"/><stop offset=".6" stop-color="#a9d0ee"/><stop offset="1" stop-color="#86b6de"/></radialGradient></defs>
<path d="M2 28C-1 14 8 2 24 1c14-1 24 7 23.500 19S36 44 22 46C10 47.500 4 40 2 28z" fill="#2f5784"/>
<path d="M3 28C.5 15 9 3.500 24 2.500 37 1.500 44.500 9 44 20S34 41.500 21 43.500C10 45 4.500 38 3 28z" fill="#5a88b4"/>
<path d="M4 27C2 15 10 5 23 4c11-1 18 5 17.500 14S31 38 19 40C10 41.500 5.500 36 4 27z" fill="url(#cw1)" stroke="#2f5784" stroke-width="1.100"/>
<path d="M8 24c-1-9 6-16 15-16.500 8-.5 13 3.500 12.500 10S28 32 19 33.500C12 34.500 8.500 30 8 24z" fill="none" stroke="#2f5784" stroke-width="1.200"/>
<path d="M12 22c-.5-6 4-11 11-11.500 5.500-.5 9 2.500 8.500 7S26 28 19.500 29c-4.500.6-7.200-2.500-7.500-7z" fill="none" stroke="#2f5784" stroke-width="1.100"/>
<path d="M6 14c2-4 5-6.500 9-8M5 18c.5-1.500 1-2.500 2-4" fill="none" stroke="#fff" stroke-width="1" opacity=".8"/>
<path d="M25 37c5-3 9-7 11-12" fill="none" stroke="#d6eafa" stroke-width="2.500" opacity=".6"/></svg>
<svg style="position:absolute;left:90px;top:446px" width="13" height="13" viewBox="0 0 13 13"><rect x=".5" y=".5" width="12" height="12" fill="#fff" stroke="#c9cdd2"/><path d="M9.900 1.900l-.5 5.700-1.600-1.600C6.600 7.200 6.300 9 6.900 11.200H3.600C2.600 8 3.500 5.300 5.600 3.900L4 2.300z" fill="#2b5fa8"/></svg>
<div class="lbl" style="left:54px;top:463px;width:120px"><span style="letter-spacing:-0.238px">ClamWin</span><br><span style="letter-spacing:0.11px">Antivirus</span></div>
<svg style="position:absolute;left:166px;top:411px;overflow:hidden" width="48" height="48" viewBox="0 0 48 48"><defs><linearGradient id="su1" x1="0" y1="0" x2="0" y2="1"><stop offset="0" stop-color="#8cc63f"/><stop offset=".55" stop-color="#4c9a20"/><stop offset="1" stop-color="#3a8018"/></linearGradient></defs>
<path d="M24 1.500c1 0 2 .4 2.800 1.200l19.500 19c1.500 1.500 1.500 3.500 0 5L26.800 46c-1.600 1.500-4 1.500-5.600 0L1.700 26.700c-1.500-1.500-1.500-3.500 0-5L21.200 2.700C22 1.900 23 1.500 24 1.500z" fill="url(#su1)"/>
<path d="M12 37l9.200 9c1.600 1.500 4 1.500 5.600 0l13-12.700C36 28 32 27 27 29c-6 2.500-10 6-15 8z" fill="#fff"/>
<path d="M33 10c-7-3-15 0-15 7 0 5 4 7 9 8.500 5 1.500 7 3 6 6.500-1 4-8 7-17 6 10 4 22 1 23-7 .8-6-4-8.500-9-10-4-1.200-6-2.500-5.500-5 .6-3 4.500-5 8.500-6z" fill="#fff"/></svg>
<svg style="position:absolute;left:166px;top:446px" width="13" height="13" viewBox="0 0 13 13"><rect x=".5" y=".5" width="12" height="12" fill="#fff" stroke="#c9cdd2"/><path d="M9.900 1.900l-.5 5.700-1.600-1.600C6.600 7.200 6.300 9 6.900 11.200H3.600C2.600 8 3.500 5.300 5.600 3.900L4 2.300z" fill="#2b5fa8"/></svg>
<div class="lbl" style="left:130px;top:463px;width:120px"><span style="letter-spacing:-0.504px">SoapUI 4.6.1</span></div>
<svg style="position:absolute;left:242px;top:411px;overflow:hidden" width="48" height="48" viewBox="0 0 48 48"><path d="M35.600 0v12.500L4.500 36.500 0 34v-4.500z" fill="#7e3fc6"/>
<path d="M35.600 48V35.500L5.700 9.900 0 11.600v6z" fill="#9658d8"/>
<path d="M0 11.600l5.700-1.700v26.300L0 34z" fill="#6a2aa8"/><path d="M5.700 9.900v7l-3-1.500z" fill="#9658d8"/>
<path d="M35.600 0L48 6v36l-12.400 6z" fill="#b78cf2"/><path d="M35.600 0l3 1.500v45l-3 1.500z" fill="#a576e8"/></svg>
<svg style="position:absolute;left:242px;top:446px" width="13" height="13" viewBox="0 0 13 13"><rect x=".5" y=".5" width="12" height="12" fill="#fff" stroke="#c9cdd2"/><path d="M9.900 1.900l-.5 5.700-1.600-1.600C6.600 7.200 6.300 9 6.900 11.200H3.600C2.600 8 3.500 5.300 5.600 3.900L4 2.300z" fill="#2b5fa8"/></svg>
<div class="lbl" style="left:206px;top:463px;width:120px"><span style="letter-spacing:-0.268px">Start</span><br><span style="letter-spacing:-0.207px">Experiment...</span></div>
<svg style="position:absolute;left:318px;top:411px;overflow:hidden" width="48" height="48" viewBox="0 0 48 48"><path d="M5 1.500h17v45H5z" fill="#f4f4f4" stroke="#c0c0c0" stroke-width=".8"/><text x="4" y="24" font-family="Liberation Sans,sans-serif" font-weight="bold" font-size="17" fill="#2a9a2a">c#</text>
<path d="M10 30h12M10 34h12M10 38h12" stroke="#5a8ad0" stroke-width="1.200"/></svg>
<svg style="position:absolute;left:318px;top:446px" width="13" height="13" viewBox="0 0 13 13"><rect x=".5" y=".5" width="12" height="12" fill="#fff" stroke="#c9cdd2"/><path d="M9.900 1.900l-.5 5.700-1.600-1.600C6.600 7.200 6.300 9 6.900 11.200H3.600C2.600 8 3.500 5.300 5.600 3.900L4 2.300z" fill="#2b5fa8"/></svg>
<div class="lbl" style="left:282px;top:463px;width:120px"><span style="letter-spacing:-0.257px">WayFinders</span></div>
<svg style="position:absolute;left:14px;top:512px;overflow:hidden" width="48" height="48" viewBox="0 0 48 48"><defs><linearGradient id="pcb" x1="0" y1="0" x2="1" y2="1"><stop offset="0" stop-color="#7fd0ff"/><stop offset=".5" stop-color="#3aa8f6"/><stop offset="1" stop-color="#1b8ae6"/></linearGradient></defs>
<path d="M3 38.800l11-4.300 22.800 7L26.400 46.300z" fill="#e4e7e9" stroke="#c9cdd0" stroke-width=".6"/>
<path d="M7 38.600l7.500-3 18.500 5.700-7 3.200z" fill="none" stroke="#fff" stroke-width=".9" stroke-dasharray="1.600 1"/><path d="M11 40l7-3M16 41.500l7-3.200M21 43l7-3.300" stroke="#fff" stroke-width=".8"/>
<path d="M24 34l8-2 8.500 3.500-7 3z" fill="#c6cbcf"/><path d="M29 29l5 1.500v6l-5-1.500z" fill="#aeb4b9"/>
<path d="M13.500 5l32.500 10v21L14.500 27.500z" fill="#e9ecee"/><path d="M14.800 6.800l30 9.300v18.200L15.700 26.500z" fill="url(#pcb)"/></svg>
<svg style="position:absolute;left:14px;top:547px" width="13" height="13" viewBox="0 0 13 13"><rect x=".5" y=".5" width="12" height="12" fill="#fff" stroke="#c9cdd2"/><path d="M9.900 1.900l-.5 5.700-1.600-1.600C6.600 7.200 6.300 9 6.900 11.200H3.600C2.600 8 3.500 5.300 5.600 3.900L4 2.300z" fill="#2b5fa8"/></svg>
<div class="lbl" style="left:-22px;top:564px;width:120px"><span style="letter-spacing:-0.581px">192.168.0.7</span></div>
<svg style="position:absolute;left:90px;top:512px;overflow:hidden" width="48" height="48" viewBox="0 0 48 48"><g fill="#686868"><path d="M0 38.500C0 32 5 26.700 12 26.700h12.100v4.800H12.500c-4 0-7.200 3-7.200 7 0 3.300 2.200 5.500 5.200 5.500 2.600 0 4.500-1.800 4.500-4.200v-.8h-4.500v-4h9.500v5c0 4.600-4 8-9.500 8C4.500 48 0 44 0 38.500z"/><rect x="19.300" y="33" width="4.800" height="15"/>
<rect x="31.100" y="0" width="6.200" height="48"/><rect x="31.100" y="7.600" width="14.600" height="4"/><rect x="31.100" y="44" width="14.600" height="4"/><rect x="42.300" y="32.500" width="3.400" height="15.500"/><rect x="37.300" y="36" width="2.600" height="8"/></g>
<rect x="9" y="0" width="6.400" height="16.600" fill="#3cb44c"/><rect x=".2" y="6.300" width="23.900" height="5.300" fill="#3cb44c"/><rect x=".2" y="19.100" width="23.900" height="4.800" fill="#d93a2e"/>
<path d="M32.500 16.500c1.500 6 11 8.500 12.500 16" fill="none" stroke="#d93a2e" stroke-width="3.200"/><path d="M32.800 31.500c1.200-7.500 10.500-9.500 11.500-17" fill="none" stroke="#3cb44c" stroke-width="3.400"/><path d="M40.300 16.300l4.300-4.800 2.900 5.800z" fill="#3cb44c"/></svg>
<svg style="position:absolute;left:90px;top:547px" width="13" height="13" viewBox="0 0 13 13"><rect x=".5" y=".5" width="12" height="12" fill="#fff" stroke="#c9cdd2"/><path d="M9.900 1.900l-.5 5.700-1.600-1.600C6.600 7.200 6.300 9 6.900 11.200H3.600C2.600 8 3.500 5.300 5.600 3.900L4 2.300z" fill="#2b5fa8"/></svg>
<div class="lbl" style="left:54px;top:564px;width:120px"><span style="letter-spacing:-0.111px">Git</span><br><span style="letter-spacing:-0.27px">Extensions</span></div>
<svg style="position:absolute;left:166px;top:512px;overflow:hidden" width="48" height="48" viewBox="0 0 48 48"><g fill="#f5a300"><path d="M.8 14.200l5.500-2.800 2.400 5-5.500 2.600z" /><path d="M13 8.200l6.300-1.400 1.200 5.800-6.300 1.300z"/><path d="M26 8.500l5.200-3.300 3.300 5.400-5.200 3.400z"/><path d="M39 15l6.300-2 1.600 6-6.200 2.100z"/></g>
<path d="M4.600 27.500C5.500 19.500 14 15 24 15.300c8 .3 14 3.200 17.500 8.500-4-3-9.500-4.500-15.500-4.300-8 .3-14.500 3.500-15.500 9-.8 5.500 5.500 9.700 14 9.200 6-.3 11-2.300 14-5.800 1.200 1 1.400 2.300.5 3.500-3 4-9 6.300-15.500 6.300C13 41.700 3.800 36 4.600 27.500z" fill="#f5a300"/>
<path d="M37.500 29l6.500-5 .9 1.500-6 5zM35.500 32l5 2.200-.9 1.500-5-2.200zM38.500 26l3-3.500 1.200 1-3 3.500z" fill="#f5a300"/>
<circle cx="23.700" cy="26.800" r="7.200" fill="#d6200f"/><path d="M23.700 26.800c0-2 3-2 3 .6s-4 4-6.200 1.200-1-7.200 3-7.800 7.300 2.800 6.800 7.200-4 6.500-8 6" fill="none" stroke="#f06a50" stroke-width="1.300"/></svg>
<svg style="position:absolute;left:166px;top:547px" width="13" height="13" viewBox="0 0 13 13"><rect x=".5" y=".5" width="12" height="12" fill="#fff" stroke="#c9cdd2"/><path d="M9.900 1.900l-.5 5.700-1.600-1.600C6.600 7.200 6.300 9 6.900 11.200H3.600C2.600 8 3.500 5.300 5.600 3.900L4 2.300z" fill="#2b5fa8"/></svg>
<div class="lbl" style="left:130px;top:564px;width:120px"><span style="letter-spacing:-0.245px">XnView</span></div>
<svg style="position:absolute;left:242px;top:512px;overflow:hidden" width="48" height="48" viewBox="0 0 48 48"><defs><linearGradient id="fz1" x1="0" y1="0" x2="0" y2="1"><stop offset="0" stop-color="#c80808"/><stop offset="1" stop-color="#8a0000"/></linearGradient></defs>
<rect x="1.500" y="1.500" width="45.500" height="45.500" fill="url(#fz1)" stroke="#b40000" stroke-width="2.500" stroke-dasharray="2.200 1.800"/>
<path d="M13 7h22l-1.500 6H19l-1.800 8h10l-1.500 5.500h-10L12 42H5z" fill="#fff"/><path d="M27 19h17l-1 5-12 12h9l-1.500 6H20l1.200-5.500 12-12h-8z" fill="#fff"/></svg>
<svg style="position:absolute;left:242px;top:547px" width="13" height="13" viewBox="0 0 13 13"><rect x=".5" y=".5" width="12" height="12" fill="#fff" stroke="#c9cdd2"/><path d="M9.900 1.900l-.5 5.700-1.600-1.600C6.600 7.200 6.300 9 6.900 11.200H3.600C2.600 8 3.500 5.300 5.600 3.900L4 2.300z" fill="#2b5fa8"/></svg>
<div class="lbl" style="left:206px;top:564px;width:120px"><span style="letter-spacing:-0.149px">FileZilla</span><br><span style="letter-spacing:-0.113px">Client</span></div>
<svg style="position:absolute;left:318px;top:512px;overflow:hidden" width="48" height="48" viewBox="0 0 48 48"><defs><radialGradient id="ga1" cx=".4" cy=".35" r=".7"><stop offset="0" stop-color="#8fd0ff"/><stop offset=".6" stop-color="#2a70e0"/><stop offset="1" stop-color="#0c2c90"/></radialGradient></defs>
<circle cx="20" cy="26" r="19" fill="url(#ga1)"/><path d="M6 18c4-3 9-2 10 2s-3 6-2 10 5 4 4 9c-6-1-13-7-12-21zM20 8c4 2 4 6 2 8z" fill="#3ab848"/>
<path d="M2 6l10-4 10 3-3 3 4 4-5 5-4-4-3 3z" fill="#f8c020" stroke="#c89000" stroke-width=".8"/></svg>
<svg style="position:absolute;left:318px;top:547px" width="13" height="13" viewBox="0 0 13 13"><rect x=".5" y=".5" width="12" height="12" fill="#fff" stroke="#c9cdd2"/><path d="M9.900 1.900l-.5 5.700-1.600-1.600C6.600 7.200 6.300 9 6.900 11.200H3.600C2.600 8 3.500 5.300 5.600 3.900L4 2.300z" fill="#2b5fa8"/></svg>
<div class="lbl" style="left:282px;top:564px;width:120px"><span style="letter-spacing:-1.169px">IE</span></div>
<svg style="position:absolute;left:14px;top:613px;overflow:hidden" width="48" height="48" viewBox="0 0 48 48"><defs><linearGradient id="fob" x1="0" y1="0" x2="1" y2="0"><stop offset="0" stop-color="#ffe9a2"/><stop offset="1" stop-color="#f8d775"/></linearGradient></defs>
<path d="M8 5.500h23.500c.8 0 1.500.7 1.500 1.500v16l2 1.500V39H8z" fill="#f3cf6a"/>
<path d="M8 5.500l8.500 5v36L8 40z" fill="url(#fob)"/><path d="M16.500 10.500v36L8 40" fill="none" stroke="#e6c25a" stroke-width=".6"/>
<path d="M16.500 12H33v11.500l2 1.500V39H16.500z" fill="#f8da80" opacity=".9"/></svg>
<svg style="position:absolute;left:14px;top:648px" width="13" height="13" viewBox="0 0 13 13"><rect x=".5" y=".5" width="12" height="12" fill="#fff" stroke="#c9cdd2"/><path d="M9.900 1.900l-.5 5.700-1.600-1.600C6.600 7.200 6.300 9 6.900 11.200H3.600C2.600 8 3.500 5.300 5.600 3.900L4 2.300z" fill="#2b5fa8"/></svg>
<div class="lbl" style="left:-22px;top:665px;width:120px"><span style="letter-spacing:-0.336px">SystemApps</span></div>
<svg style="position:absolute;left:90px;top:613px;overflow:hidden" width="48" height="48" viewBox="0 0 48 48"><g transform="rotate(-17 4 16)"><rect x="3" y="9" width="41" height="8" fill="#fff" stroke="#000" stroke-width="1.200"/><path d="M7 9l-3 8h5l3-8zM17 9l-3 8h5l3-8zM27 9l-3 8h5l3-8zM37 9l-3 8h5l3-8z" fill="#000"/></g>
<circle cx="6" cy="17" r="2.500" fill="#222"/>
<rect x="3.500" y="15.500" width="41" height="8" fill="#fff" stroke="#000" stroke-width="1.200"/><path d="M8 15.500l-3 8h5l3-8zM18 15.500l-3 8h5l3-8zM28 15.500l-3 8h5l3-8zM38 15.500l-3 8h5l3-8z" fill="#000"/>
<path d="M4 23.500h40.500V42c0 2-1 3.500-3 3.500H7c-2 0-3-1.500-3-3.500z" fill="#fff" stroke="#000" stroke-width="1.200"/>
<text x="13" y="41" font-family="Liberation Sans,sans-serif" font-weight="bold" font-size="19" fill="#e8581a" text-anchor="middle">3</text><text x="25" y="41" font-family="Liberation Sans,sans-serif" font-weight="bold" font-size="19" fill="#2a7ae0" text-anchor="middle">2</text><text x="36" y="41" font-family="Liberation Sans,sans-serif" font-weight="bold" font-size="19" fill="#1a9a1a" text-anchor="middle">1</text></svg>
<svg style="position:absolute;left:90px;top:648px" width="13" height="13" viewBox="0 0 13 13"><rect x=".5" y=".5" width="12" height="12" fill="#fff" stroke="#c9cdd2"/><path d="M9.900 1.900l-.5 5.700-1.600-1.600C6.600 7.200 6.300 9 6.900 11.200H3.600C2.600 8 3.500 5.300 5.600 3.900L4 2.300z" fill="#2b5fa8"/></svg>
<div class="lbl" style="left:54px;top:665px;width:120px"><span style="letter-spacing:-0.368px">MPC-HC x64</span></div>
<svg style="position:absolute;left:166px;top:613px;overflow:hidden" width="48" height="48" viewBox="0 0 48 48"><g stroke="#d8dce0" stroke-width="2" stroke-linecap="round"><path d="M2 14h8M1 20h7M2 26h4M1 32h3"/></g><g transform="translate(0,10) scale(1)"><path d="M13 2h34l-7 24H6z" fill="#0a2a90" transform="translate(1.500,1.500)" opacity=".5"/><path d="M13 1h34l-7 25H6z" fill="#ece9d8" stroke="#1c48b8" stroke-width="1.600"/><path d="M13 1h34l-1.400 5H11.600z" fill="#1c54d0"/>
<path d="M40 2.500h1.500v1.500H40zM42.500 2.500h1.500v1.500h-1.500z" fill="#fff"/><rect x="44.800" y="2.300" width="1.800" height="1.800" fill="#e85020"/>
<path d="M15 11h23l-2.200 8H12.800z" fill="#fff" stroke="#555" stroke-width="1.300"/><path d="M18 13l-1 4" stroke="#000" stroke-width="1"/></g></svg>
<svg style="position:absolute;left:166px;top:648px" width="13" height="13" viewBox="0 0 13 13"><rect x=".5" y=".5" width="12" height="12" fill="#fff" stroke="#c9cdd2"/><path d="M9.900 1.900l-.5 5.700-1.600-1.600C6.600 7.200 6.300 9 6.900 11.200H3.600C2.600 8 3.500 5.300 5.600 3.900L4 2.300z" fill="#2b5fa8"/></svg>
<div class="lbl" style="left:130px;top:665px;width:120px"><span style="letter-spacing:0.038px">autoruns</span></div>
<svg style="position:absolute;left:242px;top:613px;overflow:hidden" width="48" height="48" viewBox="0 0 48 48"><defs><linearGradient id="sq1" x1="0" y1="0" x2="1" y2="0"><stop offset="0" stop-color="#d8d8d8"/><stop offset=".35" stop-color="#f4f4f4"/><stop offset="1" stop-color="#8c8c8c"/></linearGradient></defs>
<ellipse cx="24" cy="46" rx="19" ry="2.500" fill="#000" opacity=".2"/><path d="M6 10v30c0 3.500 8 6 18 6s18-2.500 18-6V10z" fill="url(#sq1)"/><ellipse cx="24" cy="10" rx="18" ry="7" fill="#ececec" stroke="#bcbcbc" stroke-width=".6"/>
<path d="M6 20c0 3.500 8 6 18 6s18-2.500 18-6M6 31c0 3.500 8 6 18 6s18-2.500 18-6" fill="none" stroke="#8a8a8a" stroke-width="1.300"/>
<path d="M12 36C18 24 26 14 39 11c-1 3-2 4-4 5 1 0 2 0 3 .5-2 3-4 4-7 5 1 .3 2 .3 3 .8-4 4-9 5-14 6z" fill="#9a9a9a" opacity=".85"/><path d="M12 37C17 27 24 19 34 14" fill="none" stroke="#6a6a6a" stroke-width="1"/></svg>
<svg style="position:absolute;left:242px;top:648px" width="13" height="13" viewBox="0 0 13 13"><rect x=".5" y=".5" width="12" height="12" fill="#fff" stroke="#c9cdd2"/><path d="M9.900 1.900l-.5 5.700-1.600-1.600C6.600 7.200 6.300 9 6.900 11.200H3.600C2.600 8 3.500 5.300 5.600 3.900L4 2.300z" fill="#2b5fa8"/></svg>
<div class="lbl" style="left:206px;top:665px;width:120px"><span style="letter-spacing:-0.226px">SQLiteStudio</span></div>
<svg style="position:absolute;left:318px;top:613px;overflow:hidden" width="48" height="48" viewBox="0 0 48 48"><path d="M10 30L22 6v30l-8 6z" fill="#f0c850"/><path d="M10 30l4 12-2 2-3-8z" fill="#e8d8a0"/><path d="M14 43h8" stroke="#a0a0a0" stroke-width="2"/><path d="M16 16l6-10v8z" fill="#f8e080"/></svg>
<svg style="position:absolute;left:318px;top:648px" width="13" height="13" viewBox="0 0 13 13"><rect x=".5" y=".5" width="12" height="12" fill="#fff" stroke="#c9cdd2"/><path d="M9.900 1.900l-.5 5.700-1.600-1.600C6.600 7.200 6.300 9 6.900 11.200H3.600C2.600 8 3.500 5.300 5.600 3.900L4 2.300z" fill="#2b5fa8"/></svg>
<div class="lbl" style="left:282px;top:665px;width:120px"><span style="letter-spacing:-0.391px">URLOrganizer</span></div>
<svg style="position:absolute;left:14px;top:714px;overflow:hidden" width="48" height="48" viewBox="0 0 48 48"><g fill="#00b4f0"><path d="M3 8.500l17-3v17.500H3zM22 5l23-4v22H22zM3 25h17v17.500l-17-3zM22 25h23v22l-23-4z"/></g><g transform="translate(25.5,23.5)"><path d="M10 0c3 2 6 2.500 9.500 2.500v9c0 5-4 8.500-9.500 11.500C4.500 20 .5 16.500.5 11.500v-9C4 2.500 7 2 10 0z" fill="#f2f2f2" stroke="#8c8c8c" stroke-width=".7"/><path d="M10 1.800c2.600 1.600 5.200 2 7.900 2.100V11H10z" fill="#fbb534"/><path d="M10 1.800C7.400 3.400 4.800 3.800 2.100 3.900V11H10z" fill="#1e72c8"/><path d="M2.100 12h7.900v9.200C5.600 18.700 2.300 16 2.100 12z" fill="#fbb534"/><path d="M17.900 12H10v9.200c4.400-2.500 7.700-5.200 7.900-9.200z" fill="#1e72c8"/></g></svg>
<svg style="position:absolute;left:14px;top:749px" width="13" height="13" viewBox="0 0 13 13"><rect x=".5" y=".5" width="12" height="12" fill="#fff" stroke="#c9cdd2"/><path d="M9.900 1.900l-.5 5.700-1.600-1.600C6.600 7.200 6.300 9 6.900 11.200H3.600C2.600 8 3.500 5.300 5.600 3.900L4 2.300z" fill="#2b5fa8"/></svg>
<div class="lbl" style="left:-22px;top:766px;width:120px"><span style="letter-spacing:-0.136px">Windows 10</span><br><span style="letter-spacing:-0.215px">Upgrade ...</span></div>
<svg style="position:absolute;left:90px;top:714px;overflow:hidden" width="48" height="48" viewBox="0 0 48 48"><defs><linearGradient id="il1" x1="0" y1="0" x2="1" y2="1"><stop offset="0" stop-color="#f0f2f6"/><stop offset=".6" stop-color="#a8b0c4"/><stop offset="1" stop-color="#6a7694"/></linearGradient><radialGradient id="il2" cx=".4" cy=".35" r=".7"><stop offset="0" stop-color="#d0e8ff"/><stop offset=".6" stop-color="#6aa8f0"/><stop offset="1" stop-color="#3a70c8"/></radialGradient></defs>
<rect x="16.500" y="13" width="29" height="20" rx="2.500" fill="url(#il1)" stroke="#4a5678" stroke-width="1.200"/>
<path d="M8 24l8 4" stroke="#b8b8d0" stroke-width="2.500"/><circle cx="5.500" cy="23.500" r="3.800" fill="#c8d0e0" stroke="#a0a0c0" stroke-width="1"/>
<circle cx="19" cy="29.500" r="7.500" fill="url(#il2)" stroke="#b4a8c8" stroke-width="1.600"/><path d="M13.500 31c2 3 8 3.500 11-.5" stroke="#e8f4ff" stroke-width="1.500" fill="none" opacity=".8"/></svg>
<svg style="position:absolute;left:90px;top:749px" width="13" height="13" viewBox="0 0 13 13"><rect x=".5" y=".5" width="12" height="12" fill="#fff" stroke="#c9cdd2"/><path d="M9.900 1.900l-.5 5.700-1.600-1.600C6.600 7.200 6.300 9 6.900 11.200H3.600C2.600 8 3.500 5.300 5.600 3.900L4 2.300z" fill="#2b5fa8"/></svg>
<div class="lbl" style="left:54px;top:766px;width:120px"><span style="letter-spacing:-0.537px">ILSpy</span></div>
<svg style="position:absolute;left:166px;top:714px;overflow:hidden" width="48" height="48" viewBox="0 0 48 48"><rect x="16" y="1" width="17" height="13" fill="#e8e8e8" stroke="#000" stroke-width="1.400"/><rect x="19.500" y="4" width="9" height="6.500" fill="#008080"/><rect x="15" y="15" width="18" height="4" fill="#d0d0d0" stroke="#000" stroke-width="1"/>
<rect x="2" y="28" width="16" height="12" fill="#e0e0e0" stroke="#000" stroke-width="1.400"/><rect x="5" y="30.500" width="9" height="7" fill="#0000d0"/><rect x="1" y="41" width="18" height="5" fill="#c8c8c8" stroke="#000" stroke-width="1"/>
<rect x="28" y="40" width="18" height="6" fill="#c8c8c8" stroke="#000" stroke-width="1"/><rect x="38" y="42" width="6" height="3" fill="#00c8e8"/><rect x="40" y="44" width="6" height="3" fill="#0020d0"/>
<circle cx="21.500" cy="26" r="8.500" fill="#18d8e8"/><circle cx="21.500" cy="26" r="5" fill="none" stroke="#084848" stroke-width="1" stroke-dasharray="1 1"/><path d="M19 23l5 6M24 23l-5 6M21.500 22v8" stroke="#084848" stroke-width=".8"/><g transform="translate(26,24)"><path d="M10 0c3 2 6 2.500 9.500 2.500v9c0 5-4 8.500-9.500 11.500C4.500 20 .5 16.500.5 11.500v-9C4 2.500 7 2 10 0z" fill="#f2f2f2" stroke="#8c8c8c" stroke-width=".7"/><path d="M10 1.800c2.600 1.600 5.200 2 7.900 2.100V11H10z" fill="#fbb534"/><path d="M10 1.800C7.400 3.400 4.800 3.800 2.100 3.900V11H10z" fill="#1e72c8"/><path d="M2.100 12h7.900v9.200C5.600 18.700 2.300 16 2.100 12z" fill="#fbb534"/><path d="M17.900 12H10v9.200c4.400-2.500 7.700-5.200 7.900-9.200z" fill="#1e72c8"/></g></svg>
<svg style="position:absolute;left:166px;top:749px" width="13" height="13" viewBox="0 0 13 13"><rect x=".5" y=".5" width="12" height="12" fill="#fff" stroke="#c9cdd2"/><path d="M9.900 1.900l-.5 5.700-1.600-1.600C6.600 7.200 6.300 9 6.900 11.200H3.600C2.600 8 3.500 5.300 5.600 3.900L4 2.300z" fill="#2b5fa8"/></svg>
<div class="lbl" style="left:130px;top:766px;width:120px"><span style="letter-spacing:0.046px">Tcpview</span></div>
<svg style="position:absolute;left:242px;top:714px;overflow:hidden" width="48" height="48" viewBox="0 0 48 48"><path d="M3 10l12-5 10 4v16L13 30 3 25z" fill="#2a9a3a"/><path d="M3 10l12-5 10 4-12 5z" fill="#5ac860"/><path d="M15 5l9-4 8 3-7 5z" fill="#b050c8"/>
<path d="M26 7l12-6 9 4-1 13-10 5-10-4z" fill="#e8c020"/><path d="M26 7l12-6 9 4-11 5z" fill="#f8e060"/>
<path d="M3 26l10 5 10-4v14l-10 5-10-5z" fill="#c82828"/><path d="M13 31v15l10-5V27z" fill="#a01818"/><path d="M13 31l12 12 8-4V25z" fill="#b82020"/>
<path d="M12 17l10-5 10 4v12l-10 5-10-4z" fill="#4a90e0"/><path d="M12 17l10-5 10 4-10 5z" fill="#8cc0f8"/><path d="M22 21v12l10-5V16z" fill="#2a68c0"/>
<path d="M33 21l8-3 5 2v10l-8 4z" fill="#2458b0"/><g transform="translate(26,24)"><path d="M10 0c3 2 6 2.500 9.500 2.500v9c0 5-4 8.500-9.500 11.500C4.500 20 .5 16.500.5 11.500v-9C4 2.500 7 2 10 0z" fill="#f2f2f2" stroke="#8c8c8c" stroke-width=".7"/><path d="M10 1.800c2.600 1.600 5.200 2 7.900 2.100V11H10z" fill="#fbb534"/><path d="M10 1.800C7.400 3.400 4.800 3.800 2.100 3.900V11H10z" fill="#1e72c8"/><path d="M2.100 12h7.900v9.200C5.600 18.700 2.300 16 2.100 12z" fill="#fbb534"/><path d="M17.900 12H10v9.200c4.400-2.500 7.700-5.200 7.900-9.200z" fill="#1e72c8"/></g></svg>
<svg style="position:absolute;left:242px;top:749px" width="13" height="13" viewBox="0 0 13 13"><rect x=".5" y=".5" width="12" height="12" fill="#fff" stroke="#c9cdd2"/><path d="M9.900 1.900l-.5 5.700-1.600-1.600C6.600 7.200 6.300 9 6.900 11.200H3.600C2.600 8 3.500 5.300 5.600 3.900L4 2.300z" fill="#2b5fa8"/></svg>
<div class="lbl" style="left:206px;top:766px;width:120px"><span style="letter-spacing:-0.103px">Defraggler</span></div>
<svg style="position:absolute;left:318px;top:714px;overflow:hidden" width="48" height="48" viewBox="0 0 48 48"><rect x="4" y="8" width="20" height="32" fill="#f0f0f0" stroke="#b0b0b0" stroke-width="1"/><rect x="4" y="8" width="20" height="3" fill="#d0d0d0"/>
<path d="M13 16l2 2 4-5M13 24l2 2 4-5M13 32l2 2 4-5" fill="none" stroke="#4a9ae8" stroke-width="1.600"/></svg>
<svg style="position:absolute;left:318px;top:749px" width="13" height="13" viewBox="0 0 13 13"><rect x=".5" y=".5" width="12" height="12" fill="#fff" stroke="#c9cdd2"/><path d="M9.900 1.900l-.5 5.700-1.600-1.600C6.600 7.200 6.300 9 6.900 11.200H3.600C2.600 8 3.500 5.300 5.600 3.900L4 2.300z" fill="#2b5fa8"/></svg>
<div class="lbl" style="left:282px;top:766px;width:120px"><span style="letter-spacing:0.553px">ftp</span></div>
<svg style="position:absolute;left:14px;top:815px;overflow:hidden" width="48" height="48" viewBox="0 0 48 48"><defs><radialGradient id="ff1" cx=".78" cy=".12" r="1.050"><stop offset="0" stop-color="#fff45e"/><stop offset=".28" stop-color="#ffc532"/><stop offset=".52" stop-color="#ff8a1c"/><stop offset=".78" stop-color="#ff3a48"/><stop offset="1" stop-color="#e2148a"/></radialGradient>
<radialGradient id="ff2" cx=".5" cy=".3" r=".75"><stop offset="0" stop-color="#9a5cff"/><stop offset=".6" stop-color="#7040e0"/><stop offset="1" stop-color="#4a2ab0"/></radialGradient>
<linearGradient id="ff3" x1="0" y1="0" x2="1" y2="1"><stop offset="0" stop-color="#ffbc28"/><stop offset="1" stop-color="#ff7a1a"/></linearGradient></defs>
<path d="M30.800 0c1.500 4 5.500 6.500 9.500 10.500 4 4 6.200 7 6.200 13.500C46.500 36.500 37 46 24 46S1.500 36.500 1.500 24.500c0-8 4-14 9.100-17.300-.3 2.600.2 4.800 1.400 6.300 1.200-2 2.800-3.600 4.700-4.500-.2 1.800.1 3.200.8 4.200 1.500-.8 3.300-1.200 5-1C24 8 27.500 5 30.800 0z" fill="url(#ff1)"/>
<circle cx="23.800" cy="23.300" r="10.500" fill="url(#ff2)"/>
<path d="M30.800 0c-1.800 5-.8 9 3.200 13s6 9 4.500 15c-1.500 5-5.500 8-9.500 9 4-4 5.500-8 4.500-12s-3.500-6-5.500-6.500c2-.5 4 0 5.500 1.500-1.500-5-4.500-7.500-8.500-8 2-4 3.500-8 5.800-12z" fill="#ffe23e" opacity=".92"/>
<path d="M12.500 16c3.500-2 8.500-1 11.500 3.500-2 1-4 2.300-4.500 4.500-2.500.5-4 2-4.500 4-3-3-3.800-7.500-2.500-12z" fill="url(#ff3)"/><path d="M14.500 19.500c2.500-1 5.500-.5 8 1.200-2.500.3-4.500 1.300-5.500 3-1.500-1-2.200-2.500-2.500-4.200z" fill="#ffc83a"/>
<path d="M13.300 28c1.500 6 7 9.500 13 8.500 5-1 8.500-4.500 9.500-9.500 1.500 7-3 14-11.500 14.500C16 42 11 36 13.300 28z" fill="#ff4a3a" opacity=".55"/></svg>
<svg style="position:absolute;left:14px;top:850px" width="13" height="13" viewBox="0 0 13 13"><rect x=".5" y=".5" width="12" height="12" fill="#fff" stroke="#c9cdd2"/><path d="M9.900 1.900l-.5 5.700-1.600-1.600C6.600 7.200 6.300 9 6.900 11.200H3.600C2.600 8 3.500 5.300 5.600 3.900L4 2.300z" fill="#2b5fa8"/></svg>
<div class="lbl" style="left:-22px;top:867px;width:120px"><span style="letter-spacing:-0.096px">Firefox</span></div>
<svg style="position:absolute;left:90px;top:815px;overflow:hidden" width="48" height="48" viewBox="0 0 48 48"><defs><linearGradient id="rc1" x1="0" y1="0" x2="1" y2=".25"><stop offset="0" stop-color="#9c9cba"/><stop offset=".5" stop-color="#77779a"/><stop offset="1" stop-color="#5a5a76"/></linearGradient></defs>
<rect x=".8" y=".8" width="46.600" height="46.600" fill="url(#rc1)" stroke="#fff" stroke-width="1.500"/>
<rect x="5.800" y="10.400" width="31.500" height="26.500" rx="4.500" fill="#fff"/><rect x="38" y="16.700" width="4.300" height="15" rx="1.500" fill="#fff"/>
<path d="M10 5.800l11 2.100v5.600l-11 2.200z" fill="#fff" stroke="#c8c8d8" stroke-width=".5"/>
<path d="M12.900 38h19.800M31.300 38.300l3.600 3.600" stroke="#fff" stroke-width="1.500" fill="none"/></svg>
<svg style="position:absolute;left:90px;top:850px" width="13" height="13" viewBox="0 0 13 13"><rect x=".5" y=".5" width="12" height="12" fill="#fff" stroke="#c9cdd2"/><path d="M9.900 1.900l-.5 5.700-1.600-1.600C6.600 7.200 6.300 9 6.900 11.200H3.600C2.600 8 3.500 5.300 5.600 3.900L4 2.300z" fill="#2b5fa8"/></svg>
<div class="lbl" style="left:54px;top:867px;width:120px"><span style="letter-spacing:-0.294px">Recorder</span></div>
<svg style="position:absolute;left:166px;top:815px;overflow:hidden" width="48" height="48" viewBox="0 0 48 48"><path d="M10 9c5-4 11-5 18-2l-4 15c-6-3-12-2-18 1z" fill="#e85a18"/><path d="M30 8c5 3 11 3 17-1l-5 16c-5 4-11 4-16 1z" fill="#7ab828"/>
<path d="M5 26c6-3 12-4 18-1l-4 15c-6-3-12-2-17 1z" fill="#2a68d0"/><path d="M25 27c5 3 11 3 16-1l-4 16c-5 4-11 4-16 1z" fill="#f0c818"/>
<g stroke="#d8dce0" stroke-width="1.500" stroke-linecap="round"><path d="M1 17h6M1 21h5M1 25h4M1 29h3"/></g><g transform="translate(2,13) scale(0.62)"><path d="M13 2h34l-7 24H6z" fill="#0a2a90" transform="translate(1.500,1.500)" opacity=".5"/><path d="M13 1h34l-7 25H6z" fill="#ece9d8" stroke="#1c48b8" stroke-width="1.600"/><path d="M13 1h34l-1.400 5H11.600z" fill="#1c54d0"/>
<path d="M40 2.500h1.500v1.500H40zM42.500 2.500h1.500v1.500h-1.500z" fill="#fff"/><rect x="44.800" y="2.300" width="1.800" height="1.800" fill="#e85020"/>
<path d="M15 11h23l-2.200 8H12.800z" fill="#fff" stroke="#555" stroke-width="1.300"/><path d="M18 13l-1 4" stroke="#000" stroke-width="1"/></g></svg>
<svg style="position:absolute;left:166px;top:850px" width="13" height="13" viewBox="0 0 13 13"><rect x=".5" y=".5" width="12" height="12" fill="#fff" stroke="#c9cdd2"/><path d="M9.900 1.900l-.5 5.700-1.600-1.600C6.600 7.200 6.300 9 6.900 11.200H3.600C2.600 8 3.500 5.300 5.600 3.900L4 2.300z" fill="#2b5fa8"/></svg>
<div class="lbl" style="left:130px;top:867px;width:120px"><span style="letter-spacing:-0.003px">Procmon</span></div>
<svg style="position:absolute;left:242px;top:815px;overflow:hidden" width="48" height="48" viewBox="0 0 48 48"><rect x="1" y="6.500" width="47" height="35" fill="#fff"/><circle cx="36" cy="24" r="11" fill="none" stroke="#f0a030" stroke-width="4.500"/>
<text x="0" y="34" font-family="Liberation Sans,sans-serif" font-weight="bold" font-size="26" fill="#5aa86a">H</text>
<text x="14" y="33" font-family="Liberation Sans,sans-serif" font-weight="bold" font-size="21" fill="#000">x</text>
<text x="28" y="34" font-family="Liberation Sans,sans-serif" font-size="24" fill="#e8e0d8" stroke="#d89030" stroke-width=".8">D</text></svg>
<svg style="position:absolute;left:242px;top:850px" width="13" height="13" viewBox="0 0 13 13"><rect x=".5" y=".5" width="12" height="12" fill="#fff" stroke="#c9cdd2"/><path d="M9.900 1.900l-.5 5.700-1.600-1.600C6.600 7.200 6.300 9 6.900 11.200H3.600C2.600 8 3.500 5.300 5.600 3.900L4 2.300z" fill="#2b5fa8"/></svg>
<div class="lbl" style="left:206px;top:867px;width:120px"><span style="letter-spacing:-0.111px">HxD</span></div>
<svg style="position:absolute;left:318px;top:815px;overflow:hidden" width="48" height="48" viewBox="0 0 48 48"><rect x="1" y="3" width="24" height="39" fill="#3a3a3a" stroke="#d0d0d0" stroke-width="1.500"/><path d="M6 12h16" stroke="#e8e8e8" stroke-width="1.200"/><text x="9" y="33" font-family="Liberation Sans,sans-serif" font-weight="bold" font-size="19" fill="#f0f0f0">C</text></svg>
<svg style="position:absolute;left:318px;top:850px" width="13" height="13" viewBox="0 0 13 13"><rect x=".5" y=".5" width="12" height="12" fill="#fff" stroke="#c9cdd2"/><path d="M9.900 1.900l-.5 5.700-1.600-1.600C6.600 7.200 6.300 9 6.900 11.200H3.600C2.600 8 3.500 5.300 5.600 3.900L4 2.300z" fill="#2b5fa8"/></svg>
<div class="lbl" style="left:282px;top:867px;width:120px"><span style="letter-spacing:-0.104px">WcfTestClient</span></div>
<svg style="position:absolute;left:14px;top:916px;overflow:hidden" width="48" height="48" viewBox="0 0 48 48"><g transform="translate(-.5,-.5)"><path d="M5.450 13.500A22 22 0 0 1 43.550 13.500H24.500A11 11 0 0 0 14.970 30z" fill="#db4437"/>
<path d="M43.550 13.500A22 22 0 0 1 24.500 46.500L34.030 30A11 11 0 0 0 24.500 13.500z" fill="#ffcd40"/>
<path d="M24.500 46.500A22 22 0 0 1 5.450 13.500L14.970 30A11 11 0 0 0 34.030 30z" fill="#0f9d58"/>
<path d="M5.450 13.500L14.970 30A11 11 0 0 1 15 19z" fill="#000" opacity=".12"/>
<circle cx="24.500" cy="24.500" r="10.200" fill="#fff"/><circle cx="24.500" cy="24.500" r="8.200" fill="#4c8bf5"/></g></svg>
<svg style="position:absolute;left:14px;top:951px" width="13" height="13" viewBox="0 0 13 13"><rect x=".5" y=".5" width="12" height="12" fill="#fff" stroke="#c9cdd2"/><path d="M9.900 1.900l-.5 5.700-1.600-1.600C6.600 7.200 6.300 9 6.900 11.200H3.600C2.600 8 3.500 5.300 5.600 3.900L4 2.300z" fill="#2b5fa8"/></svg>
<div class="lbl" style="left:-22px;top:968px;width:120px"><span style="letter-spacing:-0.116px">Google</span><br><span style="letter-spacing:-0.28px">Chrome</span></div>
<svg style="position:absolute;left:90px;top:916px;overflow:hidden" width="48" height="48" viewBox="0 0 48 48"><defs><linearGradient id="ws1" x1="0" y1="0" x2="1" y2="1"><stop offset="0" stop-color="#5aa8f8"/><stop offset=".5" stop-color="#1a5ad0"/><stop offset="1" stop-color="#0a2a90"/></linearGradient></defs>
<path d="M47 1c-4 8-6 18-5 28 .5 6 1.500 11 2 16H3c1-8 4-15 9-22C20 12 32 4 47 1z" fill="url(#ws1)"/>
<path d="M44 3c-3 8-4 17-3.500 26-3-10-1-19 3.500-26z" fill="#0a2280" opacity=".5"/>
<path d="M3 45c1-3 2-5 3.500-7 5 1.500 10 0 15 1s11 2 20 0c.5 2 1 4 1.500 6z" fill="#7ab0e8"/><path d="M5 41c6 1 11-.5 17 .5s12 1.500 20 0M4 43.500c7 .5 13-.5 19 0s12 1 21 0" stroke="#d8ecff" stroke-width=".8" fill="none"/></svg>
<svg style="position:absolute;left:90px;top:951px" width="13" height="13" viewBox="0 0 13 13"><rect x=".5" y=".5" width="12" height="12" fill="#fff" stroke="#c9cdd2"/><path d="M9.900 1.900l-.5 5.700-1.600-1.600C6.600 7.200 6.300 9 6.900 11.200H3.600C2.600 8 3.500 5.300 5.600 3.900L4 2.300z" fill="#2b5fa8"/></svg>
<div class="lbl" style="left:54px;top:968px;width:120px"><span style="letter-spacing:-0.223px">Wireshark</span></div>
<svg style="position:absolute;left:166px;top:916px;overflow:hidden" width="48" height="48" viewBox="0 0 48 48"><defs><linearGradient id="np1" x1="0" y1="0" x2="0" y2="1"><stop offset="0" stop-color="#dcf25a"/><stop offset=".5" stop-color="#7ed636"/><stop offset="1" stop-color="#2eae22"/></linearGradient></defs>
<path d="M3 5h24.500l6 6 4 30.500-32.500 1.500z" fill="#fbfcfb" stroke="#9aa49a" stroke-width=".8"/><path d="M27.500 5v6h6z" fill="#d4dad4" stroke="#9aa49a" stroke-width=".5"/>
<path d="M5 4.500v-2M8 4.500v-2M11 4.500v-2M14 4.500v-2M17 4.500v-2M20 4.500v-2M23 4.500v-2M26 4.500v-2" stroke="#505050" stroke-width="1.200"/>
<path d="M5 10h21M5 13h27M5 16h28M5 19h28" stroke="#b8cce8" stroke-width=".8"/>
<path d="M3.300 21.500h31.500l2.600 20-32.300 1.500z" fill="url(#np1)"/>
<path d="M9 27c0-7.500 6-10.500 12-9.500 3 .5 5.500 2 5.500 5s-2.500 5-6.500 5.500c-2 .3-3 1.500-3 3.500 0 3-2 5-4.500 4.500C9.500 35.400 9 31.500 9 27z" fill="#96dc56" stroke="#1a4a10" stroke-width="1"/>
<path d="M14.500 31.500c2-.5 3.500 1 3 2.800s-3 2-3.800.5" fill="none" stroke="#1a4a10" stroke-width="1"/>
<circle cx="19.800" cy="15.800" r="2.700" fill="#fff" stroke="#101010" stroke-width=".9"/><circle cx="24.800" cy="16.800" r="2.400" fill="#fff" stroke="#101010" stroke-width=".9"/><circle cx="20.300" cy="15.800" r=".9"/><circle cx="25.200" cy="16.800" r=".8"/>
<path d="M5.500 26.500h22" stroke="#6a2a8a" stroke-width="1"/><path d="M10 25.500h14" stroke="#2a2a2a" stroke-width=".8" stroke-dasharray="2 1"/>
<path d="M21 33v7.500M23.500 33v7.500M26.500 37.500h5M29 35.500v4" stroke="#1a4a10" stroke-width="1"/>
<path d="M44.400 2.400l2.400 1.100L33 35l-2.600 1.800.2-3z" fill="#f2b01e" stroke="#8a5a10" stroke-width=".6"/><path d="M44.400 2.400l2.400 1.100-1.200 2.800-2.400-1.100z" fill="#c43838"/><path d="M30.600 33.800l-.2 3 2.600-1.800z" fill="#3a2a10"/></svg>
<svg style="position:absolute;left:166px;top:951px" width="13" height="13" viewBox="0 0 13 13"><rect x=".5" y=".5" width="12" height="12" fill="#fff" stroke="#c9cdd2"/><path d="M9.900 1.900l-.5 5.700-1.600-1.600C6.600 7.200 6.300 9 6.900 11.200H3.600C2.600 8 3.500 5.300 5.600 3.900L4 2.300z" fill="#2b5fa8"/></svg>
<div class="lbl" style="left:130px;top:968px;width:120px"><span style="letter-spacing:0.291px">Notepad++</span></div>
<svg style="position:absolute;left:242px;top:916px;overflow:hidden" width="48" height="48" viewBox="0 0 48 48"><g stroke="#18d818" stroke-width="2.800"><path d="M12 1l37 22M2 24l40 24"/></g><g stroke="#0a7a0a" stroke-width=".8"><path d="M13 -.5l37 22M1 25.500l40 24"/></g>
<g font-family="Liberation Sans,sans-serif" font-weight="bold" font-size="15" fill="#f8c808" stroke="#a87800" stroke-width=".6"><text x="6" y="19" transform="rotate(18 6 19)">T</text><text x="15" y="25" transform="rotate(18 15 25)">F</text><text x="26" y="32" transform="rotate(18 26 32)">T</text><text x="36" y="38" transform="rotate(18 36 38)">P</text></g></svg>
<svg style="position:absolute;left:242px;top:951px" width="13" height="13" viewBox="0 0 13 13"><rect x=".5" y=".5" width="12" height="12" fill="#fff" stroke="#c9cdd2"/><path d="M9.900 1.900l-.5 5.700-1.600-1.600C6.600 7.200 6.300 9 6.900 11.200H3.600C2.600 8 3.500 5.300 5.600 3.900L4 2.300z" fill="#2b5fa8"/></svg>
<div class="lbl" style="left:206px;top:968px;width:120px"><span style="letter-spacing:-0.099px">Tftpd64</span></div>
<svg style="position:absolute;left:318px;top:916px;overflow:hidden" width="48" height="48" viewBox="0 0 48 48"><path d="M1 24L22 2v44z" fill="#2ea84a"/></svg>
<svg style="position:absolute;left:318px;top:951px" width="13" height="13" viewBox="0 0 13 13"><rect x=".5" y=".5" width="12" height="12" fill="#fff" stroke="#c9cdd2"/><path d="M9.900 1.900l-.5 5.700-1.600-1.600C6.600 7.200 6.300 9 6.900 11.200H3.600C2.600 8 3.500 5.300 5.600 3.900L4 2.300z" fill="#2b5fa8"/></svg>
<div class="lbl" style="left:282px;top:968px;width:120px"><span style="letter-spacing:-0.187px">Fiddler 4</span></div>
<svg style="position:absolute;left:394px;top:916px;overflow:hidden" width="48" height="48" viewBox="0 0 48 48"></svg>
<div class="lbl" style="left:358px;top:968px;width:120px"><span style="letter-spacing:0.057px">desktop.ini</span></div>
<svg style="position:absolute;left:1838px;top:7px;overflow:hidden" width="48" height="48" viewBox="0 0 48 48"><rect width="48" height="48" fill="#0078d7"/>
<path d="M7.700 15.800L29.500 8 40 11.400v26.900L28.500 40.500V14.200L15.400 18v14.200l-7.100 2.300z" fill="#12a8ea"/>
<path d="M28.500 14.200l1-6.200L40 11.400v26.900l-11.500 2.200z" fill="#00b6f2"/><path d="M7.700 15.800L15.400 18v14.200l-7.100 2.300z" fill="#38c4f6"/><path d="M7.700 15.800L29.500 8l-1 6.200L15.400 18z" fill="#1cb4f0"/>
<path d="M28.500 14.200l1-6.200v32.300l-1 .2z" fill="#7adcfa"/>
<path d="M36.800 27.600l1.900-1.200v2.300l-2.500.8zM35.800 32.300l2.900-1.300v2l-3.400 1zM34.900 36.600l3.800-1.200v1.700l-4.200 1z" fill="#fff"/></svg>
<svg style="position:absolute;left:1838px;top:42px" width="13" height="13" viewBox="0 0 13 13"><rect x=".5" y=".5" width="12" height="12" fill="#fff" stroke="#c9cdd2"/><path d="M9.900 1.900l-.5 5.700-1.600-1.600C6.600 7.200 6.300 9 6.900 11.200H3.600C2.600 8 3.500 5.300 5.600 3.900L4 2.300z" fill="#2b5fa8"/></svg>
<div class="lbl" style="left:1802px;top:59px;width:120px"><span style="letter-spacing:-0.203px">3D Builder</span></div>
<svg style="position:absolute;left:1838px;top:108px;overflow:hidden" width="48" height="48" viewBox="0 0 48 48"><defs><clipPath id="p3c"><path d="M25.600 6C24 12.500 12 18 11.500 28 11 35.500 17 41.200 24.500 41.200S37.800 35.500 37 28C36.200 20 28 16 25.600 6z"/></clipPath>
<linearGradient id="p3a" x1="0" y1="0" x2="1" y2="1"><stop offset="0" stop-color="#40d0fa"/><stop offset="1" stop-color="#1a8ae6"/></linearGradient></defs>
<rect width="48" height="48" fill="#0078d7"/><g clip-path="url(#p3c)"><rect x="8" y="4" width="32" height="40" fill="url(#p3a)"/>
<path d="M10 25c7-5 18 3 28 5 1 5-1 8-5 10C27 31 17 28.500 10 30z" fill="#8a5cd2"/><path d="M30 40c5-2 8-6 8-11l-3-1c0 5-2 9-5 12z" fill="#7a50c0"/>
<path d="M13 19.500c8-5 17 2 25 6v5C28 28 18 19.500 10 25z" fill="#f04e8c"/>
<path d="M25.600 5c-1 4-4 7.500-8 11 5-2 11-1 15 3-2-4-6-8-7-14z" fill="#ffc81e"/></g></svg>
<svg style="position:absolute;left:1838px;top:143px" width="13" height="13" viewBox="0 0 13 13"><rect x=".5" y=".5" width="12" height="12" fill="#fff" stroke="#c9cdd2"/><path d="M9.900 1.900l-.5 5.700-1.600-1.600C6.600 7.200 6.300 9 6.900 11.200H3.600C2.600 8 3.500 5.300 5.600 3.900L4 2.300z" fill="#2b5fa8"/></svg>
<div class="lbl" style="left:1802px;top:160px;width:120px"><span style="letter-spacing:-0.253px">Paint 3D</span></div>
<svg style="position:absolute;left:1838px;top:209px;overflow:hidden" width="48" height="48" viewBox="0 0 48 48"><rect width="48" height="48" fill="#0078d7"/><path d="M24 7l15 8.500v17L24 41 9 32.500v-17z" fill="none" stroke="#fff" stroke-width="2.800" stroke-linejoin="round"/><path d="M9 15.500L24 24l15-8.500M24 24v17" fill="none" stroke="#fff" stroke-width="2.800"/></svg>
<svg style="position:absolute;left:1838px;top:244px" width="13" height="13" viewBox="0 0 13 13"><rect x=".5" y=".5" width="12" height="12" fill="#fff" stroke="#c9cdd2"/><path d="M9.900 1.900l-.5 5.700-1.600-1.600C6.600 7.200 6.300 9 6.900 11.200H3.600C2.600 8 3.500 5.300 5.600 3.900L4 2.300z" fill="#2b5fa8"/></svg>
<div class="lbl" style="left:1802px;top:261px;width:120px"><span style="letter-spacing:-0.352px">View 3D</span></div>
<svg style="position:absolute;left:1838px;top:310px;overflow:hidden" width="48" height="48" viewBox="0 0 48 48"><defs><linearGradient id="rv1" x1="0" y1="0" x2="1" y2="1"><stop offset="0" stop-color="#6a68b0"/><stop offset=".5" stop-color="#2a2870"/><stop offset="1" stop-color="#16144a"/></linearGradient></defs>
<g transform="translate(-1.200,2) scale(1.050)"><ellipse cx="24" cy="34" rx="9" ry="2.800" fill="#d8d8d8" stroke="#a8a8a8" stroke-width=".6"/><rect x="20.500" y="27" width="7" height="7" fill="#b8b8b8"/>
<path d="M6 2.500h37c1 0 1.500.5 1.500 1.500l-1 24c0 1-.5 1.500-1.500 1.500H7.500c-1 0-1.500-.5-1.500-1.500L5 4c0-1 .3-1.500 1-1.500z" fill="#e4e4e4" stroke="#a0a0a0" stroke-width=".8"/>
<path d="M8.500 5.500h32l-1 20.500H9.500z" fill="url(#rv1)"/><path d="M8.500 5.500h32l-.3 7C28 12 18 16 9 21z" fill="#8a88c8" opacity=".35"/></g></svg>
<svg style="position:absolute;left:1838px;top:345px" width="13" height="13" viewBox="0 0 13 13"><rect x=".5" y=".5" width="12" height="12" fill="#fff" stroke="#c9cdd2"/><path d="M9.900 1.900l-.5 5.700-1.600-1.600C6.600 7.200 6.300 9 6.900 11.200H3.600C2.600 8 3.500 5.300 5.600 3.900L4 2.300z" fill="#2b5fa8"/></svg>
<div class="lbl" style="left:1802px;top:362px;width:120px"><span style="letter-spacing:-0.336px">Remote</span><br><span style="letter-spacing:-0.113px">viewer</span></div>
<svg style="position:absolute;left:1838px;top:411px;overflow:hidden" width="48" height="48" viewBox="0 0 48 48"><g fill="#f5a300"><path d="M.8 14.200l5.500-2.800 2.400 5-5.500 2.600z" /><path d="M13 8.200l6.300-1.400 1.200 5.800-6.300 1.300z"/><path d="M26 8.500l5.200-3.300 3.300 5.400-5.200 3.400z"/><path d="M39 15l6.300-2 1.600 6-6.200 2.100z"/></g>
<path d="M4.600 27.500C5.500 19.500 14 15 24 15.300c8 .3 14 3.200 17.500 8.500-4-3-9.500-4.500-15.500-4.300-8 .3-14.500 3.500-15.500 9-.8 5.500 5.500 9.700 14 9.200 6-.3 11-2.300 14-5.800 1.200 1 1.400 2.300.5 3.500-3 4-9 6.300-15.500 6.300C13 41.700 3.800 36 4.600 27.500z" fill="#f5a300"/>
<path d="M37.500 29l6.500-5 .9 1.500-6 5zM35.500 32l5 2.200-.9 1.500-5-2.200zM38.500 26l3-3.500 1.200 1-3 3.500z" fill="#f5a300"/>
<circle cx="23.700" cy="26.800" r="7.200" fill="#d6200f"/><path d="M23.700 26.800c0-2 3-2 3 .6s-4 4-6.200 1.200-1-7.200 3-7.800 7.300 2.800 6.800 7.200-4 6.500-8 6" fill="none" stroke="#f06a50" stroke-width="1.300"/><path d="M26 2l7 1-2 2 4.500 4.500-2.500 2.500L28.500 7.500l-2 2zM44 20l-7-1 2-2-4.500-4.500 2.500-2.500 4.500 4.500 2-2z" fill="#4aa8f0" stroke="#e8f4ff" stroke-width=".8"/></svg>
<svg style="position:absolute;left:1838px;top:446px" width="13" height="13" viewBox="0 0 13 13"><rect x=".5" y=".5" width="12" height="12" fill="#fff" stroke="#c9cdd2"/><path d="M9.900 1.900l-.5 5.700-1.600-1.600C6.600 7.200 6.300 9 6.900 11.200H3.600C2.600 8 3.500 5.300 5.600 3.900L4 2.300z" fill="#2b5fa8"/></svg>
<div class="lbl" style="left:1802px;top:463px;width:120px"><span style="letter-spacing:-0.002px">MobaXterm</span></div>
<svg style="position:absolute;left:1838px;top:512px;overflow:hidden" width="48" height="48" viewBox="0 0 48 48"><defs><linearGradient id="xma" x1="0" y1="0" x2="1" y2="0"><stop offset="0" stop-color="#e6501a"/><stop offset=".5" stop-color="#f08a20"/><stop offset="1" stop-color="#f4c050"/></linearGradient></defs>
<ellipse cx="25" cy="29" rx="22" ry="12.500" fill="none" stroke="url(#xma)" stroke-width="2" transform="rotate(-10 25 29)"/>
<path d="M3 24c0-8 8-12.500 16-14-6 3.500-10 8-10 14s4 10.500 10 13C10 35.500 3 31.500 3 24z" fill="#e6501a"/>
<path d="M1 1h13l33 46H34z" fill="#000"/>
<path d="M37 1h10L31.500 22.500l-4.200-5.800zM17.300 27l3.900 5.300L10 47H1z" fill="#fff"/><path d="M36.500 1H47L31.500 22.500M21.200 32.300L10 47H1" fill="none" stroke="#000" stroke-width="1.100"/>
<path d="M29 43c7-1.500 14-5.500 17-10-2 6.500-9 11-16 12z" fill="#f4b840"/></svg>
<svg style="position:absolute;left:1838px;top:547px" width="13" height="13" viewBox="0 0 13 13"><rect x=".5" y=".5" width="12" height="12" fill="#fff" stroke="#c9cdd2"/><path d="M9.900 1.900l-.5 5.700-1.600-1.600C6.600 7.200 6.300 9 6.900 11.200H3.600C2.600 8 3.500 5.300 5.600 3.900L4 2.300z" fill="#2b5fa8"/></svg>
<div class="lbl" style="left:1802px;top:564px;width:120px"><span style="letter-spacing:-0.003px">Xming</span></div>
<svg style="position:absolute;left:1838px;top:613px;overflow:hidden" width="48" height="48" viewBox="0 0 48 48"><defs><linearGradient id="xmb" x1="0" y1="0" x2="1" y2="0"><stop offset="0" stop-color="#e6501a"/><stop offset=".5" stop-color="#f08a20"/><stop offset="1" stop-color="#f4c050"/></linearGradient></defs>
<ellipse cx="25" cy="29" rx="22" ry="12.500" fill="none" stroke="url(#xmb)" stroke-width="2" transform="rotate(-10 25 29)"/>
<path d="M3 24c0-8 8-12.500 16-14-6 3.500-10 8-10 14s4 10.500 10 13C10 35.500 3 31.500 3 24z" fill="#e6501a"/>
<path d="M1 1h13l33 46H34z" fill="#000"/>
<path d="M37 1h10L31.500 22.500l-4.200-5.800zM17.300 27l3.900 5.300L10 47H1z" fill="#fff"/><path d="M36.500 1H47L31.500 22.500M21.200 32.300L10 47H1" fill="none" stroke="#000" stroke-width="1.100"/>
<path d="M29 43c7-1.500 14-5.500 17-10-2 6.500-9 11-16 12z" fill="#f4b840"/></svg>
<svg style="position:absolute;left:1838px;top:648px" width="13" height="13" viewBox="0 0 13 13"><rect x=".5" y=".5" width="12" height="12" fill="#fff" stroke="#c9cdd2"/><path d="M9.900 1.900l-.5 5.700-1.600-1.600C6.600 7.200 6.300 9 6.900 11.200H3.600C2.600 8 3.500 5.300 5.600 3.900L4 2.300z" fill="#2b5fa8"/></svg>
<div class="lbl" style="left:1802px;top:665px;width:120px"><span style="letter-spacing:-0.196px">XLaunch</span></div>
<div style="position:absolute;left:338px;top:53px;width:1426px;height:914px;background:#fff;box-shadow:0 4px 14px 1px rgba(0,0,0,.36),0 0 2px rgba(0,0,0,.3);border:1px solid #33504a;box-sizing:border-box;"></div>
<div style="position:absolute;left:339px;top:54px;width:1424px;height:30px;background:#fff;"></div>
<svg style="position:absolute;left:347px;top:60px" width="16" height="16" viewBox="0 0 16 16"><circle cx="6.5" cy="6.5" r="5.5" fill="url(#gl16)"/><path d="M1.79 4.54C2.57 2.57 4.54 1.39 6.50 1.16C6.97 1.79 6.66 2.57 5.87 2.81C4.93 3.20 4.77 4.14 3.99 4.69C3.51 5.71 3.51 6.81 2.73 7.44C1.94 7.60 1.47 6.11 1.79 4.54z" fill="#2eb42e"/><path d="M9.80 2.73C11.06 3.67 11.76 5.09 11.92 6.74C11.53 7.91 10.74 7.91 10.27 7.21C9.80 6.26 10.04 5.09 9.56 4.38C9.33 3.67 9.33 2.96 9.80 2.73z" fill="#3abc3a"/><path d="M4.38 8.62C5.32 8.39 6.74 8.86 7.21 9.80C6.97 10.74 6.26 11.45 5.32 11.84C4.38 11.21 3.91 9.80 4.38 8.62z" fill="#27a227"/><ellipse cx="4.30" cy="3.83" rx="1.57" ry="1.02" fill="#eaffc8" opacity=".55" transform="rotate(-35 4.30 3.83)"/><path d="M1 1h5l-1 1.5 3 3-1.5 1.5-3-3L2 6z" fill="#f5a800"/><rect x="9" y="5" width="6.5" height="10.5" fill="#c9ced4" stroke="#7d858d" stroke-width=".8"/><rect x="10.3" y="6.8" width="4" height="1.2" fill="#39424c"/><rect x="10.3" y="9" width="4" height="1" fill="#8a939c"/><rect x="13" y="13" width="1.5" height="1.5" fill="#39d130"/></svg>
<div class="t" style="left:368px;top:60.84px;letter-spacing:-0.142px;">Internet Information Services (IIS) Manager</div>
<svg style="position:absolute;left:1640px;top:58px;" width="110" height="20" viewBox="0 0 110 20"><path d="M4.5 10.5h10" stroke="#000" stroke-width="1" fill="none"/><rect x="49.5" y="5.5" width="9" height="9" stroke="#000" fill="none"/><path d="M95.5 5.5l10 10M105.5 5.5l-10 10" stroke="#000" stroke-width="1.1" fill="none"/></svg>
<div style="position:absolute;left:339px;top:84px;width:1424px;height:33px;background:#b9d1ea;"></div>
<svg style="position:absolute;left:342px;top:85px;" width="58" height="30" viewBox="0 0 58 30"><defs><linearGradient id="pillg" x1="0" y1="0" x2="0" y2="1"><stop offset="0" stop-color="#a3bbd6"/><stop offset=".5" stop-color="#b0c8e2"/><stop offset="1" stop-color="#c6daf0"/></linearGradient>
<linearGradient id="pills" x1="0" y1="0" x2="0" y2="1"><stop offset="0" stop-color="#93abc6"/><stop offset=".6" stop-color="#aec4dc"/><stop offset="1" stop-color="#d6e6f6"/></linearGradient></defs>
<path d="M12 1.500C19 1 24 3.200 28.500 3.200S38 1 45 1.500c7 .5 10.500 5.500 10.500 13S52 27 45 27.500c-7 .5-12-1.700-16.500-1.700S19 28 12 27.500C5 27 1.500 22 1.500 14.500S5 2 12 1.500z" fill="url(#pillg)" stroke="url(#pills)" stroke-width="1.200"/>
<path d="M19 14.500H8.500M13.500 9l-5.500 5.500 5.500 5.500" stroke="#8a8d91" stroke-width="2.100" fill="none"/>
<path d="M39.500 14.500H50M45 9l5.500 5.500L45 20" stroke="#98a0aa" stroke-width="2.100" fill="none"/></svg>
<div style="position:absolute;left:417px;top:88px;width:1230px;height:23px;background:#eaf1fb;border:1px solid #a7bfdd;box-sizing:border-box;"></div>
<svg style="position:absolute;left:423px;top:90px" width="16" height="17" viewBox="0 0 16 17"><circle cx="10" cy="6.5" r="6" fill="url(#gl16)"/><path d="M4.86 4.36C5.71 2.21 7.86 0.93 10.00 0.67C10.51 1.36 10.17 2.21 9.31 2.47C8.29 2.90 8.11 3.93 7.26 4.53C6.74 5.64 6.74 6.84 5.89 7.53C5.03 7.70 4.51 6.07 4.86 4.36z" fill="#2eb42e"/><path d="M13.60 2.39C14.97 3.41 15.74 4.96 15.91 6.76C15.49 8.04 14.63 8.04 14.11 7.27C13.60 6.24 13.86 4.96 13.34 4.19C13.09 3.41 13.09 2.64 13.60 2.39z" fill="#3abc3a"/><path d="M7.69 8.81C8.71 8.56 10.26 9.07 10.77 10.10C10.51 11.13 9.74 11.90 8.71 12.33C7.69 11.64 7.17 10.10 7.69 8.81z" fill="#27a227"/><ellipse cx="7.60" cy="3.59" rx="1.71" ry="1.11" fill="#eaffc8" opacity=".55" transform="rotate(-35 7.60 3.59)"/><rect x="2.5" y="7.5" width="6" height="7" fill="#f4f4f4" stroke="#8a8a8a" stroke-width=".8"/><rect x="4.5" y="9" width="6" height="7" fill="#fff" stroke="#8a8a8a" stroke-width=".8"/><path d="M6 11h3M6 12.5h3M6 14h3" stroke="#3a6fc0" stroke-width=".8"/></svg>
<svg style="position:absolute;left:446px;top:95px;" width="6" height="9" viewBox="0 0 6 9"><path d="M0.5 0.5l4.5 4-4.5 4z" fill="#000"/></svg>
<div class="t" style="left:462px;top:90.84px;letter-spacing:-0.81px;">DESKTOP-LSPOOHK</div>
<svg style="position:absolute;left:578px;top:95px;" width="6" height="9" viewBox="0 0 6 9"><path d="M0.5 0.5l4.5 4-4.5 4z" fill="#000"/></svg>
<div class="t" style="left:595px;top:90.84px;letter-spacing:-0.536px;">Sites</div>
<svg style="position:absolute;left:632px;top:95px;" width="6" height="9" viewBox="0 0 6 9"><path d="M0.5 0.5l4.5 4-4.5 4z" fill="#000"/></svg>
<div class="t" style="left:646px;top:90.84px;letter-spacing:-0.177px;">Default Web Site</div>
<svg style="position:absolute;left:746px;top:95px;" width="6" height="9" viewBox="0 0 6 9"><path d="M0.5 0.5l4.5 4-4.5 4z" fill="#000"/></svg>
<div class="t" style="left:760px;top:90.84px;letter-spacing:-0.243px;">Backend</div>
<svg style="position:absolute;left:816px;top:95px;" width="6" height="9" viewBox="0 0 6 9"><path d="M0.5 0.5l4.5 4-4.5 4z" fill="#000"/></svg>
<svg style="position:absolute;left:1654px;top:89px" width="16" height="16" viewBox="0 0 16 16"><defs><linearGradient id="rfg" x1="0" y1="0" x2="0" y2="1"><stop offset="0" stop-color="#5adc58"/><stop offset=".45" stop-color="#0c8a0c"/><stop offset="1" stop-color="#22d022"/></linearGradient></defs><rect x=".5" y=".5" width="15" height="15" rx="1.5" fill="url(#rfg)" stroke="#9ab3a0" stroke-width="1"/><path d="M3 7.5l2.5-4.5 2.5 4.5h-1.7c.3 1.6 1.2 2.3 2.5 2.5l-1 1.6C5.600 11 4.800 9.500 4.700 7.500z" fill="#fff"/><path d="M13 8.500l-2.500 4.500-2.500-4.500h1.700C9.400 6.900 8.500 6.200 7.200 6l1-1.600c2.200.6 3 2.100 3.100 4.100z" fill="#fff"/></svg>
<svg style="position:absolute;left:1677px;top:89px" width="16" height="16" viewBox="0 0 16 16"><rect x=".5" y=".5" width="15" height="15" rx="1.500" fill="#d8dadc" stroke="#bcc4cc" stroke-width="1"/><path d="M4 4l8 8M12 4l-8 8" stroke="#b4b8bc" stroke-width="2"/></svg>
<svg style="position:absolute;left:1699px;top:88px" width="18" height="17" viewBox="0 0 18 17"><path d="M1 9L9 1.500 17 9" stroke="#3060c0" stroke-width="1.600" fill="none"/><path d="M3.500 8.500V16h11V8.500L9 3.500z" fill="#f4f6f8" stroke="#9aa4b0" stroke-width=".8"/><rect x="10" y="10.500" width="2.500" height="5.500" fill="#2858b8"/><rect x="5.500" y="9.500" width="2.500" height="2.500" fill="#3a4a60"/><rect x="3" y="2" width="2" height="3.500" fill="#3060c0"/></svg>
<div style="position:absolute;left:1723px;top:91px;width:1px;height:14px;background:#e6eef8;"></div>
<svg style="position:absolute;left:1728px;top:89px" width="16" height="16" viewBox="0 0 16 16"><defs><radialGradient id="hpg" cx=".4" cy=".3" r=".8"><stop offset="0" stop-color="#5d7fe0"/><stop offset="1" stop-color="#1c2fa0"/></radialGradient></defs><circle cx="8" cy="8" r="7.100" fill="url(#hpg)" stroke="#9a9ca4" stroke-width="1.700"/><text x="8" y="12" font-family="Liberation Sans,sans-serif" font-weight="bold" font-size="11" fill="#fff" text-anchor="middle">?</text></svg>
<svg style="position:absolute;left:1749px;top:95px;" width="8" height="5" viewBox="0 0 8 5"><path d="M0.5 0.5h6l-3 3.5z" fill="#000"/></svg>
<div style="position:absolute;left:339px;top:117px;width:1424px;height:25px;background:linear-gradient(#fbfbfb 0%,#f3f3f3 45%,#e3e2e3 100%);"></div>
<div class="t" style="left:354px;top:120.84px;letter-spacing:-0.334px;">File</div>
<div class="t" style="left:391px;top:120.84px;letter-spacing:-0.198px;">View</div>
<div class="t" style="left:435px;top:120.84px;letter-spacing:0.08px;">Help</div>
<div style="position:absolute;left:339px;top:142px;width:1424px;height:801px;background:linear-gradient(90deg,#f4f4f4,#f8f8f8);"></div>
<div style="position:absolute;left:340px;top:142px;width:321px;height:800px;background:#fff;border:1px solid #8d8d8f;box-sizing:border-box;"></div>
<div style="position:absolute;left:341px;top:143px;width:319px;height:23px;background:#bdbbbd;"></div>
<div class="t" style="left:348px;top:147.34px;font-weight:bold;letter-spacing:-0.379px;">Connections</div>
<div style="position:absolute;left:341px;top:166px;width:319px;height:23px;background:linear-gradient(#f7f7f7,#e9e9e9);"></div>
<div style="position:absolute;left:341px;top:189px;width:319px;height:1px;background:#4b4f6e;"></div>
<svg style="position:absolute;left:344px;top:170px" width="16" height="16" viewBox="0 0 16 16"><path d="M.5 4.500h8l1.500 1.500h4v9H.5z" fill="#ecd88a" stroke="#b09a3a" stroke-width=".9"/><path d="M1 7h12.500v7.500H1z" fill="#f3e3a0"/><path d="M2 10C2.500 6 5 3.500 8 3V1l4 3-4 3.200V5.200C5.800 5.800 4 7.500 3.500 10.500z" fill="#44b83c" stroke="#2a8a2a" stroke-width=".5"/></svg>
<div style="position:absolute;left:367px;top:172px;width:1px;height:15px;background:#c8c4a8;"></div>
<div style="position:absolute;left:371px;top:209px;width:1px;height:20px;background-image:repeating-linear-gradient(#9a9a9a 0 1px,transparent 1px 2px);"></div>
<div style="position:absolute;left:373px;top:219px;width:9px;height:1px;background-image:repeating-linear-gradient(90deg,#9a9a9a 0 1px,transparent 1px 2px);"></div>
<div style="position:absolute;left:360px;top:201px;width:3px;height:1px;background-image:repeating-linear-gradient(90deg,#9a9a9a 0 1px,transparent 1px 2px);"></div>
<div style="position:absolute;left:379px;top:237px;width:4px;height:1px;background-image:repeating-linear-gradient(90deg,#9a9a9a 0 1px,transparent 1px 2px);"></div>
<div style="position:absolute;left:398px;top:255px;width:3px;height:1px;background-image:repeating-linear-gradient(90deg,#9a9a9a 0 1px,transparent 1px 2px);"></div>
<div style="position:absolute;left:417px;top:273px;width:3px;height:1px;background-image:repeating-linear-gradient(90deg,#9a9a9a 0 1px,transparent 1px 2px);"></div>
<div style="position:absolute;left:417px;top:291px;width:2px;height:1px;background-image:repeating-linear-gradient(90deg,#9a9a9a 0 1px,transparent 1px 2px);"></div>
<div style="position:absolute;left:390px;top:245px;width:1px;height:1px;background-image:repeating-linear-gradient(#9a9a9a 0 1px,transparent 1px 2px);"></div>
<div style="position:absolute;left:409px;top:263px;width:1px;height:1px;background-image:repeating-linear-gradient(#9a9a9a 0 1px,transparent 1px 2px);"></div>
<div style="position:absolute;left:409px;top:281px;width:1px;height:1px;background-image:repeating-linear-gradient(#9a9a9a 0 1px,transparent 1px 2px);"></div>
<svg style="position:absolute;left:347px;top:197px;" width="11" height="8" viewBox="0 0 11 8"><path d="M1 1.200l4.200 4.300 4.200-4.300" stroke="#3c3c3c" stroke-width="1.700" fill="none"/></svg>
<svg style="position:absolute;left:362px;top:190px" width="17" height="18" viewBox="0 0 17 18"><circle cx="7" cy="6" r="5.5" fill="url(#gl16)"/><path d="M2.29 4.04C3.07 2.07 5.04 0.89 7.00 0.66C7.47 1.29 7.16 2.07 6.37 2.31C5.43 2.70 5.27 3.64 4.49 4.19C4.01 5.21 4.01 6.31 3.23 6.94C2.44 7.10 1.97 5.61 2.29 4.04z" fill="#2eb42e"/><path d="M10.30 2.23C11.56 3.17 12.26 4.59 12.42 6.24C12.03 7.41 11.24 7.41 10.77 6.71C10.30 5.76 10.54 4.59 10.06 3.88C9.83 3.17 9.83 2.46 10.30 2.23z" fill="#3abc3a"/><path d="M4.88 8.12C5.82 7.89 7.24 8.36 7.71 9.30C7.47 10.24 6.76 10.95 5.82 11.34C4.88 10.71 4.41 9.30 4.88 8.12z" fill="#27a227"/><ellipse cx="4.80" cy="3.33" rx="1.57" ry="1.02" fill="#eaffc8" opacity=".55" transform="rotate(-35 4.80 3.33)"/><rect x="9.500" y="5.500" width="6" height="11" fill="#cfd4d9" stroke="#7d858d" stroke-width=".8"/><rect x="10.800" y="7.300" width="3.500" height="1.200" fill="#39424c"/><rect x="10.800" y="9.500" width="3.500" height="1" fill="#8a939c"/><rect x="13" y="14" width="1.500" height="1.500" fill="#39d130"/></svg>
<div class="t" style="left:384px;top:191.84px;letter-spacing:-0.591px;">DESKTOP-LSPOOHK (DESKTOP-LSPOOHK\Mini)</div>
<svg style="position:absolute;left:382px;top:209px" width="18" height="18" viewBox="0 0 18 18"><circle cx="10.5" cy="6.5" r="5.5" fill="url(#gl16)"/><path d="M5.79 4.54C6.57 2.57 8.54 1.39 10.50 1.16C10.97 1.79 10.66 2.57 9.87 2.81C8.93 3.20 8.77 4.14 7.99 4.69C7.51 5.71 7.51 6.81 6.73 7.44C5.94 7.60 5.47 6.11 5.79 4.54z" fill="#2eb42e"/><path d="M13.80 2.73C15.06 3.67 15.76 5.09 15.92 6.74C15.53 7.91 14.74 7.91 14.27 7.21C13.80 6.26 14.04 5.09 13.56 4.38C13.33 3.67 13.33 2.96 13.80 2.73z" fill="#3abc3a"/><path d="M8.38 8.62C9.32 8.39 10.74 8.86 11.21 9.80C10.97 10.74 10.26 11.45 9.32 11.84C8.38 11.21 7.91 9.80 8.38 8.62z" fill="#27a227"/><ellipse cx="8.30" cy="3.83" rx="1.57" ry="1.02" fill="#eaffc8" opacity=".55" transform="rotate(-35 8.30 3.83)"/><rect x="3.500" y="6.500" width="6" height="7" fill="#f4f4f4" stroke="#8a8a8a" stroke-width=".8"/><rect x="5.500" y="8" width="6" height="7" fill="#fff" stroke="#8a8a8a" stroke-width=".8"/><path d="M7 10h3M7 11.500h3M7 13h3" stroke="#3a6fc0" stroke-width=".8"/><path d="M1.500 13.500c2 3 9 3.500 13 1" stroke="#d03020" stroke-width="1.500" fill="none"/></svg>
<div class="t" style="left:403px;top:209.84px;letter-spacing:0.055px;">Application Pools</div>
<svg style="position:absolute;left:366px;top:233px;" width="11" height="8" viewBox="0 0 11 8"><path d="M1 1.200l4.200 4.300 4.200-4.300" stroke="#3c3c3c" stroke-width="1.700" fill="none"/></svg>
<svg style="position:absolute;left:383px;top:227px" width="17" height="17" viewBox="0 0 17 17"><path d="M1.500 3.500h5l1 1.500h7.500v10h-13.500z" fill="#ecd684" stroke="#a8922e" stroke-width=".9"/><path d="M4 2.500h8v3h-8z" fill="#fff" stroke="#bbb" stroke-width=".5"/><circle cx="8.500" cy="10" r="3" fill="#2f6fd8"/><path d="M7 8.500c1-.5 2-.3 2.500.500-.500 1-1.500 1.500-2.500 1.200z" fill="#3fb84a"/></svg>
<div class="t" style="left:403px;top:227.84px;letter-spacing:-0.536px;">Sites</div>
<svg style="position:absolute;left:385px;top:251px;" width="11" height="8" viewBox="0 0 11 8"><path d="M1 1.200l4.200 4.300 4.200-4.300" stroke="#3c3c3c" stroke-width="1.700" fill="none"/></svg>
<svg style="position:absolute;left:400px;top:245px" width="17" height="17" viewBox="0 0 17 17"><circle cx="8" cy="8" r="7" fill="url(#gl16)"/><path d="M2.00 5.50C3.00 3.00 5.50 1.50 8.00 1.20C8.60 2.00 8.20 3.00 7.20 3.30C6.00 3.80 5.80 5.00 4.80 5.70C4.20 7.00 4.20 8.40 3.20 9.20C2.20 9.40 1.60 7.50 2.00 5.50z" fill="#2eb42e"/><path d="M12.20 3.20C13.80 4.40 14.70 6.20 14.90 8.30C14.40 9.80 13.40 9.80 12.80 8.90C12.20 7.70 12.50 6.20 11.90 5.30C11.60 4.40 11.60 3.50 12.20 3.20z" fill="#3abc3a"/><path d="M5.30 10.70C6.50 10.40 8.30 11.00 8.90 12.20C8.60 13.40 7.70 14.30 6.50 14.80C5.30 14.00 4.70 12.20 5.30 10.70z" fill="#27a227"/><ellipse cx="5.20" cy="4.60" rx="2.00" ry="1.30" fill="#eaffc8" opacity=".55" transform="rotate(-35 5.20 4.60)"/><circle cx="12.500" cy="12.500" r="4" fill="#2438a8" stroke="#dfe6f5" stroke-width=".8"/><text x="12.500" y="15.300" font-family="Liberation Sans,sans-serif" font-weight="bold" font-size="7" fill="#fff" text-anchor="middle">?</text></svg>
<div class="t" style="left:422px;top:245.84px;letter-spacing:-0.177px;">Default Web Site</div>
<svg style="position:absolute;left:406px;top:268px;" width="8" height="11" viewBox="0 0 8 11"><path d="M1.200 1l4.300 4.200-4.300 4.200" stroke="#a2a2a2" stroke-width="1.600" fill="none"/></svg>
<svg style="position:absolute;left:420px;top:263px" width="16" height="16" viewBox="0 0 16 16"><path d="M1.500 2.500h5.500l1 1.500h6.500v10.500h-13z" fill="#f0dc8c" stroke="#b09a3a" stroke-width=".9"/><path d="M2.300 6h11.500v8h-11.500z" fill="#f7e8a6"/></svg>
<div class="t" style="left:441px;top:263.84px;letter-spacing:-0.132px;">aspnet_client</div>
<div style="position:absolute;left:418px;top:281px;width:72px;height:17px;background:#d9d9d9;"></div>
<svg style="position:absolute;left:406px;top:286px;" width="8" height="11" viewBox="0 0 8 11"><path d="M1.200 1l4.300 4.200-4.300 4.200" stroke="#a2a2a2" stroke-width="1.600" fill="none"/></svg>
<svg style="position:absolute;left:420px;top:281px" width="16" height="17" viewBox="0 0 16 17"><circle cx="10" cy="6.5" r="6" fill="url(#gl16)"/><path d="M4.86 4.36C5.71 2.21 7.86 0.93 10.00 0.67C10.51 1.36 10.17 2.21 9.31 2.47C8.29 2.90 8.11 3.93 7.26 4.53C6.74 5.64 6.74 6.84 5.89 7.53C5.03 7.70 4.51 6.07 4.86 4.36z" fill="#2eb42e"/><path d="M13.60 2.39C14.97 3.41 15.74 4.96 15.91 6.76C15.49 8.04 14.63 8.04 14.11 7.27C13.60 6.24 13.86 4.96 13.34 4.19C13.09 3.41 13.09 2.64 13.60 2.39z" fill="#3abc3a"/><path d="M7.69 8.81C8.71 8.56 10.26 9.07 10.77 10.10C10.51 11.13 9.74 11.90 8.71 12.33C7.69 11.64 7.17 10.10 7.69 8.81z" fill="#27a227"/><ellipse cx="7.60" cy="3.59" rx="1.71" ry="1.11" fill="#eaffc8" opacity=".55" transform="rotate(-35 7.60 3.59)"/><rect x="2.5" y="7.5" width="6" height="7" fill="#f4f4f4" stroke="#8a8a8a" stroke-width=".8"/><rect x="4.5" y="9" width="6" height="7" fill="#fff" stroke="#8a8a8a" stroke-width=".8"/><path d="M6 11h3M6 12.5h3M6 14h3" stroke="#3a6fc0" stroke-width=".8"/></svg>
<div class="t" style="left:441px;top:281.84px;letter-spacing:-0.243px;">Backend</div>
<div style="position:absolute;left:667px;top:142px;width:890px;height:773px;background:#fff;border:1px solid #8d8d8f;box-sizing:border-box;"></div>
<svg style="position:absolute;left:681px;top:154px" width="32" height="34" viewBox="0 0 32 34"><ellipse cx="21" cy="25.300" rx="8" ry="1.800" fill="#000" opacity=".2"/><circle cx="17.5" cy="12.5" r="11.5" fill="url(#gl16)"/><path d="M7.64 8.39C9.29 4.29 13.39 1.82 17.50 1.33C18.49 2.64 17.83 4.29 16.19 4.78C14.21 5.60 13.89 7.57 12.24 8.72C11.26 10.86 11.26 13.16 9.61 14.47C7.97 14.80 6.99 11.68 7.64 8.39z" fill="#2eb42e"/><path d="M24.40 4.61C27.03 6.59 28.51 9.54 28.84 12.99C28.01 15.46 26.37 15.46 25.39 13.98C24.40 12.01 24.89 9.54 23.91 8.06C23.41 6.59 23.41 5.11 24.40 4.61z" fill="#3abc3a"/><path d="M13.06 16.94C15.04 16.44 17.99 17.43 18.98 19.40C18.49 21.37 17.01 22.85 15.04 23.67C13.06 22.36 12.08 19.40 13.06 16.94z" fill="#27a227"/><ellipse cx="12.90" cy="6.91" rx="3.29" ry="2.14" fill="#eaffc8" opacity=".55" transform="rotate(-35 12.90 6.91)"/><rect x="1.500" y="15.500" width="12" height="14" fill="#fbf8e8" stroke="#8f8f8f"/><rect x="4.500" y="18.500" width="12" height="14" fill="#fff" stroke="#8f8f8f"/><path d="M7 21.800h7M7 23.800h7M7 25.800h7M7 27.800h7M7 29.800h7" stroke="#3a70c8" stroke-width="1"/></svg>
<div class="t" style="left:730px;top:157.42px;font-size:19px;color:#000;line-height:24px;letter-spacing:0.054px;">Handler Mappings</div>
<div class="t" style="left:683px;top:199.84px;letter-spacing:-0.156px;">Use this feature to specify the resources, such as DLLs and managed code, that handle responses for specific request types.</div>
<div style="position:absolute;left:681px;top:223px;width:861px;height:24px;background:linear-gradient(#f6f6f8,#e7e6ea);"></div>
<div style="position:absolute;left:681px;top:247px;width:861px;height:1px;background:#3b3f6b;"></div>
<div class="t" style="left:688px;top:226.84px;letter-spacing:-0.077px;">Group by:</div>
<div style="position:absolute;left:745px;top:224px;width:115px;height:23px;background:#fff;"></div>
<div style="position:absolute;left:848px;top:224px;width:12px;height:23px;background:linear-gradient(#fafafa,#f0f0f0);"></div>
<div class="t" style="left:749px;top:227.84px;letter-spacing:-0.404px;">State</div>
<svg style="position:absolute;left:850px;top:233px;" width="7" height="5" viewBox="0 0 7 5"><path d="M0.5 0.5h5.5l-2.75 3.5z" fill="#000"/></svg>
<div style="position:absolute;left:681px;top:248px;width:861px;height:636px;background:#fff;"></div>
<div style="position:absolute;left:681px;top:272px;width:321px;height:612px;background:#f7f7f7;"></div>
<svg style="position:absolute;left:838px;top:248px;" width="10" height="6" viewBox="0 0 10 6"><path d="M1.5 5L5 1.5 8.5 5" stroke="#555" stroke-width="1" fill="none"/></svg>
<div style="position:absolute;left:1002px;top:248px;width:1px;height:24px;background:#e5e5e5;"></div>
<div style="position:absolute;left:1002px;top:272px;width:1px;height:612px;background:#e6edf9;"></div>
<div style="position:absolute;left:1122px;top:248px;width:1px;height:24px;background:#e5e5e5;"></div>
<div style="position:absolute;left:1122px;top:272px;width:1px;height:612px;background:#e6edf9;"></div>
<div style="position:absolute;left:1222px;top:248px;width:1px;height:24px;background:#e5e5e5;"></div>
<div style="position:absolute;left:1222px;top:272px;width:1px;height:612px;background:#e6edf9;"></div>
<div style="position:absolute;left:1322px;top:248px;width:1px;height:24px;background:#e5e5e5;"></div>
<div style="position:absolute;left:1322px;top:272px;width:1px;height:612px;background:#e6edf9;"></div>
<div style="position:absolute;left:1502px;top:248px;width:1px;height:24px;background:#e5e5e5;"></div>
<div style="position:absolute;left:1502px;top:272px;width:1px;height:612px;background:#e6edf9;"></div>
<div class="t" style="left:687px;top:251.84px;letter-spacing:-0.252px;">Name</div>
<div class="t" style="left:1009px;top:251.84px;letter-spacing:-0.171px;">Path</div>
<div class="t" style="left:1129px;top:251.84px;letter-spacing:-0.404px;">State</div>
<div class="t" style="left:1229px;top:251.84px;letter-spacing:-0.202px;">Path Type</div>
<div class="t" style="left:1329px;top:251.84px;">Handler</div>
<div class="t" style="left:1509px;top:251.84px;letter-spacing:-0.337px;">Ent</div>
<div class="t" style="left:693px;top:273.84px;color:#1e3287;letter-spacing:-0.212px;">Disabled</div>
<div style="position:absolute;left:743px;top:281px;width:783px;height:1px;background:#bccbe8;"></div>
<div class="t" style="left:693px;top:337.84px;color:#1e3287;letter-spacing:-0.291px;">Enabled</div>
<div style="position:absolute;left:740px;top:345px;width:786px;height:1px;background:#bccbe8;"></div>
<div class="t" style="left:687px;top:294.84px;color:#a5a5a5;letter-spacing:-0.525px;">CGI-exe</div>
<div class="t" style="left:1009px;top:294.84px;color:#a5a5a5;letter-spacing:-0.27px;">*.exe</div>
<div class="t" style="left:1129px;top:294.84px;color:#a5a5a5;letter-spacing:-0.212px;">Disabled</div>
<div class="t" style="left:1229px;top:294.84px;color:#a5a5a5;letter-spacing:-0.334px;">File</div>
<div class="t" style="left:1329px;top:294.84px;color:#a5a5a5;letter-spacing:0.071px;">CgiModule</div>
<div class="t" style="left:1509px;top:294.84px;color:#a5a5a5;letter-spacing:0.106px;">Inh</div>
<div class="t" style="left:687px;top:314.84px;color:#a5a5a5;letter-spacing:-0.187px;">ISAPI-dll</div>
<div class="t" style="left:1009px;top:314.84px;color:#a5a5a5;letter-spacing:0.198px;">*.dll</div>
<div class="t" style="left:1129px;top:314.84px;color:#a5a5a5;letter-spacing:-0.212px;">Disabled</div>
<div class="t" style="left:1229px;top:314.84px;color:#a5a5a5;letter-spacing:-0.334px;">File</div>
<div class="t" style="left:1329px;top:314.84px;color:#a5a5a5;letter-spacing:0.027px;">IsapiModule</div>
<div class="t" style="left:1509px;top:314.84px;color:#a5a5a5;letter-spacing:0.106px;">Inh</div>
<div style="position:absolute;left:681px;top:357px;width:845px;height:527px;overflow:hidden;"><div style="position:absolute;left:-681px;top:-357px;">
<div class="t" style="left:687px;top:358.84px;letter-spacing:-0.668px;">ASPClassic</div>
<div class="t" style="left:1009px;top:358.84px;letter-spacing:-0.27px;">*.asp</div>
<div class="t" style="left:1129px;top:358.84px;letter-spacing:-0.291px;">Enabled</div>
<div class="t" style="left:1229px;top:358.84px;letter-spacing:-0.334px;">File</div>
<div class="t" style="left:1329px;top:358.84px;letter-spacing:0.027px;">IsapiModule</div>
<div class="t" style="left:1509px;top:358.84px;letter-spacing:0.106px;">Inh</div>
<div class="t" style="left:687px;top:378.84px;letter-spacing:-0.039px;">aspq-Integrated-4.0</div>
<div class="t" style="left:1009px;top:378.84px;letter-spacing:-0.171px;">*.aspq</div>
<div class="t" style="left:1129px;top:378.84px;letter-spacing:-0.291px;">Enabled</div>
<div class="t" style="left:1229px;top:378.84px;letter-spacing:-0.064px;">Unspecified</div>
<div class="t" style="left:1329px;top:378.84px;letter-spacing:-0.066px;">System.Web.HttpForbiddenH...</div>
<div class="t" style="left:1509px;top:378.84px;letter-spacing:0.106px;">Inh</div>
<div class="t" style="left:687px;top:398.84px;letter-spacing:-0.304px;">aspq-ISAPI-4.0_32bit</div>
<div class="t" style="left:1009px;top:398.84px;letter-spacing:-0.171px;">*.aspq</div>
<div class="t" style="left:1129px;top:398.84px;letter-spacing:-0.291px;">Enabled</div>
<div class="t" style="left:1229px;top:398.84px;letter-spacing:-0.064px;">Unspecified</div>
<div class="t" style="left:1329px;top:398.84px;letter-spacing:0.027px;">IsapiModule</div>
<div class="t" style="left:1509px;top:398.84px;letter-spacing:0.106px;">Inh</div>
<div class="t" style="left:687px;top:418.84px;letter-spacing:-0.304px;">aspq-ISAPI-4.0_64bit</div>
<div class="t" style="left:1009px;top:418.84px;letter-spacing:-0.171px;">*.aspq</div>
<div class="t" style="left:1129px;top:418.84px;letter-spacing:-0.291px;">Enabled</div>
<div class="t" style="left:1229px;top:418.84px;letter-spacing:-0.064px;">Unspecified</div>
<div class="t" style="left:1329px;top:418.84px;letter-spacing:0.027px;">IsapiModule</div>
<div class="t" style="left:1509px;top:418.84px;letter-spacing:0.106px;">Inh</div>
<div class="t" style="left:687px;top:438.84px;letter-spacing:-0.175px;">AssemblyResourceLoader-Integrated</div>
<div class="t" style="left:1009px;top:438.84px;letter-spacing:-0.3px;">WebResource.axd</div>
<div class="t" style="left:1129px;top:438.84px;letter-spacing:-0.291px;">Enabled</div>
<div class="t" style="left:1229px;top:438.84px;letter-spacing:-0.064px;">Unspecified</div>
<div class="t" style="left:1329px;top:438.84px;letter-spacing:-0.267px;">System.Web.Handlers.Assem...</div>
<div class="t" style="left:1509px;top:438.84px;letter-spacing:0.106px;">Inh</div>
<div class="t" style="left:687px;top:458.84px;letter-spacing:-0.174px;">AssemblyResourceLoader-Integrated-4.0</div>
<div class="t" style="left:1009px;top:458.84px;letter-spacing:-0.3px;">WebResource.axd</div>
<div class="t" style="left:1129px;top:458.84px;letter-spacing:-0.291px;">Enabled</div>
<div class="t" style="left:1229px;top:458.84px;letter-spacing:-0.064px;">Unspecified</div>
<div class="t" style="left:1329px;top:458.84px;letter-spacing:-0.267px;">System.Web.Handlers.Assem...</div>
<div class="t" style="left:1509px;top:458.84px;letter-spacing:0.106px;">Inh</div>
<div class="t" style="left:687px;top:478.84px;letter-spacing:-0.387px;">AXD-ISAPI-2.0</div>
<div class="t" style="left:1009px;top:478.84px;letter-spacing:-0.07px;">*.axd</div>
<div class="t" style="left:1129px;top:478.84px;letter-spacing:-0.291px;">Enabled</div>
<div class="t" style="left:1229px;top:478.84px;letter-spacing:-0.064px;">Unspecified</div>
<div class="t" style="left:1329px;top:478.84px;letter-spacing:0.027px;">IsapiModule</div>
<div class="t" style="left:1509px;top:478.84px;letter-spacing:0.106px;">Inh</div>
<div class="t" style="left:687px;top:498.84px;letter-spacing:-0.336px;">AXD-ISAPI-2.0-64</div>
<div class="t" style="left:1009px;top:498.84px;letter-spacing:-0.07px;">*.axd</div>
<div class="t" style="left:1129px;top:498.84px;letter-spacing:-0.291px;">Enabled</div>
<div class="t" style="left:1229px;top:498.84px;letter-spacing:-0.064px;">Unspecified</div>
<div class="t" style="left:1329px;top:498.84px;letter-spacing:0.027px;">IsapiModule</div>
<div class="t" style="left:1509px;top:498.84px;letter-spacing:0.106px;">Inh</div>
<div class="t" style="left:687px;top:518.84px;letter-spacing:-0.354px;">AXD-ISAPI-4.0_32bit</div>
<div class="t" style="left:1009px;top:518.84px;letter-spacing:-0.07px;">*.axd</div>
<div class="t" style="left:1129px;top:518.84px;letter-spacing:-0.291px;">Enabled</div>
<div class="t" style="left:1229px;top:518.84px;letter-spacing:-0.064px;">Unspecified</div>
<div class="t" style="left:1329px;top:518.84px;letter-spacing:0.027px;">IsapiModule</div>
<div class="t" style="left:1509px;top:518.84px;letter-spacing:0.106px;">Inh</div>
<div class="t" style="left:687px;top:538.84px;letter-spacing:-0.354px;">AXD-ISAPI-4.0_64bit</div>
<div class="t" style="left:1009px;top:538.84px;letter-spacing:-0.07px;">*.axd</div>
<div class="t" style="left:1129px;top:538.84px;letter-spacing:-0.291px;">Enabled</div>
<div class="t" style="left:1229px;top:538.84px;letter-spacing:-0.064px;">Unspecified</div>
<div class="t" style="left:1329px;top:538.84px;letter-spacing:0.027px;">IsapiModule</div>
<div class="t" style="left:1509px;top:538.84px;letter-spacing:0.106px;">Inh</div>
<div class="t" style="left:687px;top:558.84px;letter-spacing:0.014px;">cshtm-Integrated-4.0</div>
<div class="t" style="left:1009px;top:558.84px;">*.cshtm</div>
<div class="t" style="left:1129px;top:558.84px;letter-spacing:-0.291px;">Enabled</div>
<div class="t" style="left:1229px;top:558.84px;letter-spacing:-0.064px;">Unspecified</div>
<div class="t" style="left:1329px;top:558.84px;letter-spacing:-0.066px;">System.Web.HttpForbiddenH...</div>
<div class="t" style="left:1509px;top:558.84px;letter-spacing:0.106px;">Inh</div>
<div class="t" style="left:687px;top:578.84px;letter-spacing:-0.241px;">cshtm-ISAPI-4.0_32bit</div>
<div class="t" style="left:1009px;top:578.84px;">*.cshtm</div>
<div class="t" style="left:1129px;top:578.84px;letter-spacing:-0.291px;">Enabled</div>
<div class="t" style="left:1229px;top:578.84px;letter-spacing:-0.064px;">Unspecified</div>
<div class="t" style="left:1329px;top:578.84px;letter-spacing:0.027px;">IsapiModule</div>
<div class="t" style="left:1509px;top:578.84px;letter-spacing:0.106px;">Inh</div>
<div class="t" style="left:687px;top:598.84px;letter-spacing:-0.241px;">cshtm-ISAPI-4.0_64bit</div>
<div class="t" style="left:1009px;top:598.84px;">*.cshtm</div>
<div class="t" style="left:1129px;top:598.84px;letter-spacing:-0.291px;">Enabled</div>
<div class="t" style="left:1229px;top:598.84px;letter-spacing:-0.064px;">Unspecified</div>
<div class="t" style="left:1329px;top:598.84px;letter-spacing:0.027px;">IsapiModule</div>
<div class="t" style="left:1509px;top:598.84px;letter-spacing:0.106px;">Inh</div>
<div class="t" style="left:687px;top:618.84px;letter-spacing:0.029px;">cshtml-Integrated-4.0</div>
<div class="t" style="left:1009px;top:618.84px;letter-spacing:0.041px;">*.cshtml</div>
<div class="t" style="left:1129px;top:618.84px;letter-spacing:-0.291px;">Enabled</div>
<div class="t" style="left:1229px;top:618.84px;letter-spacing:-0.064px;">Unspecified</div>
<div class="t" style="left:1329px;top:618.84px;letter-spacing:-0.066px;">System.Web.HttpForbiddenH...</div>
<div class="t" style="left:1509px;top:618.84px;letter-spacing:0.106px;">Inh</div>
<div class="t" style="left:687px;top:638.84px;letter-spacing:-0.214px;">cshtml-ISAPI-4.0_32bit</div>
<div class="t" style="left:1009px;top:638.84px;letter-spacing:0.041px;">*.cshtml</div>
<div class="t" style="left:1129px;top:638.84px;letter-spacing:-0.291px;">Enabled</div>
<div class="t" style="left:1229px;top:638.84px;letter-spacing:-0.064px;">Unspecified</div>
<div class="t" style="left:1329px;top:638.84px;letter-spacing:0.027px;">IsapiModule</div>
<div class="t" style="left:1509px;top:638.84px;letter-spacing:0.106px;">Inh</div>
<div class="t" style="left:687px;top:658.84px;letter-spacing:-0.214px;">cshtml-ISAPI-4.0_64bit</div>
<div class="t" style="left:1009px;top:658.84px;letter-spacing:0.041px;">*.cshtml</div>
<div class="t" style="left:1129px;top:658.84px;letter-spacing:-0.291px;">Enabled</div>
<div class="t" style="left:1229px;top:658.84px;letter-spacing:-0.064px;">Unspecified</div>
<div class="t" style="left:1329px;top:658.84px;letter-spacing:0.027px;">IsapiModule</div>
<div class="t" style="left:1509px;top:658.84px;letter-spacing:0.106px;">Inh</div>
<div style="position:absolute;left:681px;top:677px;width:900px;height:19px;background:#cce8ff;box-shadow:inset 0 0 0 1px #99d1ff;outline:1px dotted #333;outline-offset:-1px;"></div>
<div class="t" style="left:687px;top:678.84px;letter-spacing:-0.108px;">ExtensionlessUrlHandler-Integrated-4.0</div>
<div class="t" style="left:1009px;top:678.84px;">*.</div>
<div class="t" style="left:1129px;top:678.84px;letter-spacing:-0.291px;">Enabled</div>
<div class="t" style="left:1229px;top:678.84px;letter-spacing:-0.064px;">Unspecified</div>
<div class="t" style="left:1329px;top:678.84px;letter-spacing:-0.308px;">System.Web.Handlers.Transfe...</div>
<div class="t" style="left:1509px;top:678.84px;letter-spacing:0.106px;">Inh</div>
<div class="t" style="left:687px;top:698.84px;letter-spacing:-0.242px;">ExtensionlessUrlHandler-ISAPI-4.0_32bit</div>
<div class="t" style="left:1009px;top:698.84px;">*.</div>
<div class="t" style="left:1129px;top:698.84px;letter-spacing:-0.291px;">Enabled</div>
<div class="t" style="left:1229px;top:698.84px;letter-spacing:-0.064px;">Unspecified</div>
<div class="t" style="left:1329px;top:698.84px;letter-spacing:0.027px;">IsapiModule</div>
<div class="t" style="left:1509px;top:698.84px;letter-spacing:0.106px;">Inh</div>
<div class="t" style="left:687px;top:718.84px;letter-spacing:-0.242px;">ExtensionlessUrlHandler-ISAPI-4.0_64bit</div>
<div class="t" style="left:1009px;top:718.84px;">*.</div>
<div class="t" style="left:1129px;top:718.84px;letter-spacing:-0.291px;">Enabled</div>
<div class="t" style="left:1229px;top:718.84px;letter-spacing:-0.064px;">Unspecified</div>
<div class="t" style="left:1329px;top:718.84px;letter-spacing:0.027px;">IsapiModule</div>
<div class="t" style="left:1509px;top:718.84px;letter-spacing:0.106px;">Inh</div>
<div class="t" style="left:687px;top:738.84px;letter-spacing:0.046px;">HttpRemotingHandlerFactory-rem-Integrated</div>
<div class="t" style="left:1009px;top:738.84px;letter-spacing:-0.134px;">*.rem</div>
<div class="t" style="left:1129px;top:738.84px;letter-spacing:-0.291px;">Enabled</div>
<div class="t" style="left:1229px;top:738.84px;letter-spacing:-0.064px;">Unspecified</div>
<div class="t" style="left:1329px;top:738.84px;letter-spacing:-0.151px;">System.Runtime.Remoting.C...</div>
<div class="t" style="left:1509px;top:738.84px;letter-spacing:0.106px;">Inh</div>
<div class="t" style="left:687px;top:758.84px;letter-spacing:0.027px;">HttpRemotingHandlerFactory-rem-Integrated-4.0</div>
<div class="t" style="left:1009px;top:758.84px;letter-spacing:-0.134px;">*.rem</div>
<div class="t" style="left:1129px;top:758.84px;letter-spacing:-0.291px;">Enabled</div>
<div class="t" style="left:1229px;top:758.84px;letter-spacing:-0.064px;">Unspecified</div>
<div class="t" style="left:1329px;top:758.84px;letter-spacing:-0.151px;">System.Runtime.Remoting.C...</div>
<div class="t" style="left:1509px;top:758.84px;letter-spacing:0.106px;">Inh</div>
<div class="t" style="left:687px;top:778.84px;letter-spacing:-0.06px;">HttpRemotingHandlerFactory-rem-ISAPI-2.0</div>
<div class="t" style="left:1009px;top:778.84px;letter-spacing:-0.134px;">*.rem</div>
<div class="t" style="left:1129px;top:778.84px;letter-spacing:-0.291px;">Enabled</div>
<div class="t" style="left:1229px;top:778.84px;letter-spacing:-0.064px;">Unspecified</div>
<div class="t" style="left:1329px;top:778.84px;letter-spacing:0.027px;">IsapiModule</div>
<div class="t" style="left:1509px;top:778.84px;letter-spacing:0.106px;">Inh</div>
<div class="t" style="left:687px;top:798.84px;letter-spacing:-0.064px;">HttpRemotingHandlerFactory-rem-ISAPI-2.0-64</div>
<div class="t" style="left:1009px;top:798.84px;letter-spacing:-0.134px;">*.rem</div>
<div class="t" style="left:1129px;top:798.84px;letter-spacing:-0.291px;">Enabled</div>
<div class="t" style="left:1229px;top:798.84px;letter-spacing:-0.064px;">Unspecified</div>
<div class="t" style="left:1329px;top:798.84px;letter-spacing:0.027px;">IsapiModule</div>
<div class="t" style="left:1509px;top:798.84px;letter-spacing:0.106px;">Inh</div>
<div class="t" style="left:687px;top:818.84px;letter-spacing:-0.089px;">HttpRemotingHandlerFactory-rem-ISAPI-4.0_32bit</div>
<div class="t" style="left:1009px;top:818.84px;letter-spacing:-0.134px;">*.rem</div>
<div class="t" style="left:1129px;top:818.84px;letter-spacing:-0.291px;">Enabled</div>
<div class="t" style="left:1229px;top:818.84px;letter-spacing:-0.064px;">Unspecified</div>
<div class="t" style="left:1329px;top:818.84px;letter-spacing:0.027px;">IsapiModule</div>
<div class="t" style="left:1509px;top:818.84px;letter-spacing:0.106px;">Inh</div>
<div class="t" style="left:687px;top:838.84px;letter-spacing:-0.089px;">HttpRemotingHandlerFactory-rem-ISAPI-4.0_64bit</div>
<div class="t" style="left:1009px;top:838.84px;letter-spacing:-0.134px;">*.rem</div>
<div class="t" style="left:1129px;top:838.84px;letter-spacing:-0.291px;">Enabled</div>
<div class="t" style="left:1229px;top:838.84px;letter-spacing:-0.064px;">Unspecified</div>
<div class="t" style="left:1329px;top:838.84px;letter-spacing:0.027px;">IsapiModule</div>
<div class="t" style="left:1509px;top:838.84px;letter-spacing:0.106px;">Inh</div>
<div class="t" style="left:687px;top:858.84px;letter-spacing:0.037px;">HttpRemotingHandlerFactory-soap-Integrated</div>
<div class="t" style="left:1009px;top:858.84px;letter-spacing:-0.171px;">*.soap</div>
<div class="t" style="left:1129px;top:858.84px;letter-spacing:-0.291px;">Enabled</div>
<div class="t" style="left:1229px;top:858.84px;letter-spacing:-0.064px;">Unspecified</div>
<div class="t" style="left:1329px;top:858.84px;letter-spacing:-0.151px;">System.Runtime.Remoting.C...</div>
<div class="t" style="left:1509px;top:858.84px;letter-spacing:0.106px;">Inh</div>
<div class="t" style="left:687px;top:878.84px;letter-spacing:0.019px;">HttpRemotingHandlerFactory-soap-Integrated-4.0</div>
<div class="t" style="left:1009px;top:878.84px;letter-spacing:-0.171px;">*.soap</div>
<div class="t" style="left:1129px;top:878.84px;letter-spacing:-0.291px;">Enabled</div>
<div class="t" style="left:1229px;top:878.84px;letter-spacing:-0.064px;">Unspecified</div>
<div class="t" style="left:1329px;top:878.84px;letter-spacing:-0.151px;">System.Runtime.Remoting.C...</div>
<div class="t" style="left:1509px;top:878.84px;letter-spacing:0.106px;">Inh</div>
</div></div>
<div style="position:absolute;left:1526px;top:248px;width:16px;height:636px;background:#f0f0f0;"></div>
<div style="position:absolute;left:1527px;top:265px;width:14px;height:199px;background:#cdcdcd;"></div>
<svg style="position:absolute;left:1529px;top:254px;" width="10" height="7" viewBox="0 0 10 7"><path d="M1 5.5L5 1.5 9 5.5" stroke="#404040" stroke-width="1.700" fill="none"/></svg>
<svg style="position:absolute;left:1529px;top:872px;" width="10" height="7" viewBox="0 0 10 7"><path d="M1 1.5L5 5.5 9 1.5" stroke="#404040" stroke-width="1.700" fill="none"/></svg>
<div style="position:absolute;left:681px;top:884px;width:861px;height:17px;background:#f0f0f0;"></div>
<div style="position:absolute;left:698px;top:885px;width:757px;height:15px;background:#cdcdcd;"></div>
<svg style="position:absolute;left:686px;top:888px;" width="7" height="10" viewBox="0 0 7 10"><path d="M5.500 1L1.500 5l4 4" stroke="#404040" stroke-width="1.800" fill="none"/></svg>
<svg style="position:absolute;left:1513px;top:888px;" width="7" height="10" viewBox="0 0 7 10"><path d="M1.500 1l4 4-4 4" stroke="#404040" stroke-width="1.800" fill="none"/></svg>
<div style="position:absolute;left:673px;top:918px;width:99px;height:20px;background:#fff;border:1px solid #3c96e0;box-sizing:border-box;"></div>
<svg style="position:absolute;left:674px;top:920px" width="17" height="17" viewBox="0 0 17 17"><rect x="1.500" y="1.500" width="14" height="14" fill="#fff" stroke="#777"/><rect x="2" y="2" width="13" height="3" fill="#9aa4b0"/><path d="M4 7.500h2M4 10h2M4 12.500h2" stroke="#666"/><path d="M8 7.500h5M8 10h5M8 12.500h5" stroke="#999"/><path d="M7 5v10" stroke="#bbb" stroke-width=".6"/></svg>
<div class="t" style="left:694px;top:919.84px;letter-spacing:-0.345px;">Features View</div>
<svg style="position:absolute;left:774px;top:920px" width="17" height="17" viewBox="0 0 17 17"><path d="M1.500 3.500h5l1 1.500h6v9.500h-12z" fill="#ecd684" stroke="#a8922e" stroke-width=".9"/><rect x="8.500" y="7.500" width="6.500" height="8" fill="#fff" stroke="#888" stroke-width=".8"/><path d="M10 10h3.500M10 12h3.500M10 14h3.500" stroke="#3a6fc0" stroke-width=".7"/></svg>
<div class="t" style="left:793px;top:919.84px;letter-spacing:-0.096px;">Content View</div>
<div style="position:absolute;left:1562px;top:142px;width:200px;height:800px;background:linear-gradient(90deg,#fdfdfd,#f4f4f4 40%,#ebebeb);border:1px solid #8d8d8f;box-sizing:border-box;"></div>
<div style="position:absolute;left:1563px;top:143px;width:198px;height:23px;background:#bdbbbd;"></div>
<div class="t" style="left:1570px;top:147.34px;font-weight:bold;letter-spacing:-0.358px;">Actions</div>
<div class="t" style="left:1592px;top:172.84px;color:#2a86d6;letter-spacing:-0.019px;">Add Managed Handler...</div>
<div class="t" style="left:1592px;top:192.84px;color:#2a86d6;letter-spacing:-0.061px;">Add Script Map...</div>
<div class="t" style="left:1592px;top:212.84px;color:#2a86d6;letter-spacing:-0.04px;">Add Wildcard Script Map...</div>
<div class="t" style="left:1592px;top:232.84px;color:#2a86d6;letter-spacing:0.123px;">Add Module Mapping...</div>
<div class="t" style="left:1592px;top:257.84px;color:#2a86d6;letter-spacing:-0.24px;">Edit...</div>
<div class="t" style="left:1592px;top:277.84px;color:#2a86d6;letter-spacing:-0.447px;">Remove</div>
<div class="t" style="left:1592px;top:302.84px;color:#2a86d6;letter-spacing:-0.298px;">Edit Feature Permissions...</div>
<div class="t" style="left:1592px;top:322.84px;color:#2a86d6;letter-spacing:-0.239px;">Revert To Parent</div>
<div class="t" style="left:1592px;top:342.84px;color:#2a86d6;letter-spacing:-0.208px;">View Ordered List...</div>
<div class="t" style="left:1592px;top:367.84px;color:#2a86d6;letter-spacing:0.08px;">Help</div>
<div style="position:absolute;left:1566px;top:252px;width:192px;height:1px;background:#8d8d8f;"></div>
<div style="position:absolute;left:1566px;top:297px;width:192px;height:1px;background:#8d8d8f;"></div>
<div style="position:absolute;left:1566px;top:362px;width:192px;height:1px;background:#8d8d8f;"></div>
<svg style="position:absolute;left:1567px;top:277px" width="16" height="16" viewBox="0 0 16 16"><path d="M2.500 3l11 10M13.500 3l-11 10" stroke="#e02418" stroke-width="2.600" stroke-linecap="round"/></svg>
<svg style="position:absolute;left:1568px;top:367px" width="16" height="16" viewBox="0 0 16 16"><defs><radialGradient id="hpg" cx=".4" cy=".3" r=".8"><stop offset="0" stop-color="#5d7fe0"/><stop offset="1" stop-color="#1c2fa0"/></radialGradient></defs><circle cx="8" cy="8" r="7.100" fill="url(#hpg)" stroke="#9a9ca4" stroke-width="1.700"/><text x="8" y="12" font-family="Liberation Sans,sans-serif" font-weight="bold" font-size="11" fill="#fff" text-anchor="middle">?</text></svg>
<div style="position:absolute;left:339px;top:943px;width:1424px;height:23px;background:linear-gradient(90deg,#e9e7e9,#f4f4f4 50%,#f8f8f8);"></div>
<div class="t" style="left:345px;top:946.84px;letter-spacing:0.016px;">Configuration: 'Default Web Site/Backend' web.config</div>
<svg style="position:absolute;left:1737px;top:947px" width="16" height="16" viewBox="0 0 16 16"><circle cx="6.5" cy="6.5" r="5.5" fill="url(#gl16)"/><path d="M1.79 4.54C2.57 2.57 4.54 1.39 6.50 1.16C6.97 1.79 6.66 2.57 5.87 2.81C4.93 3.20 4.77 4.14 3.99 4.69C3.51 5.71 3.51 6.81 2.73 7.44C1.94 7.60 1.47 6.11 1.79 4.54z" fill="#2eb42e"/><path d="M9.80 2.73C11.06 3.67 11.76 5.09 11.92 6.74C11.53 7.91 10.74 7.91 10.27 7.21C9.80 6.26 10.04 5.09 9.56 4.38C9.33 3.67 9.33 2.96 9.80 2.73z" fill="#3abc3a"/><path d="M4.38 8.62C5.32 8.39 6.74 8.86 7.21 9.80C6.97 10.74 6.26 11.45 5.32 11.84C4.38 11.21 3.91 9.80 4.38 8.62z" fill="#27a227"/><ellipse cx="4.30" cy="3.83" rx="1.57" ry="1.02" fill="#eaffc8" opacity=".55" transform="rotate(-35 4.30 3.83)"/><path d="M1 1h5l-1 1.5 3 3-1.5 1.5-3-3L2 6z" fill="#f5a800"/><rect x="9" y="5" width="6.5" height="10.5" fill="#c9ced4" stroke="#7d858d" stroke-width=".8"/><rect x="10.3" y="6.8" width="4" height="1.2" fill="#39424c"/><rect x="10.3" y="9" width="4" height="1" fill="#8a939c"/><rect x="13" y="13" width="1.5" height="1.5" fill="#39d130"/></svg>
<svg style="position:absolute;left:1752px;top:954px;" width="8" height="10" viewBox="0 0 8 10"><g fill="#a4a4a4"><rect x="1" y="1" width="2" height="2"/><rect x="5" y="1" width="2" height="2"/><rect x="1" y="5" width="2" height="2"/><rect x="5" y="5" width="2" height="2"/></g></svg>
<div style="position:absolute;left:0;top:0;width:1920px;height:1039px;clip-path:polygon(0 966px,1763px 966px,1763px 0,1920px 0,1920px 1039px,0 1039px);pointer-events:none">
<div class="t" style="left:1599px;top:945.07px;font-size:20px;color:rgba(255,255,255,.46);line-height:26px;letter-spacing:-0.115px;">Activate Windows</div>
<div class="t" style="left:1599px;top:971.13px;font-size:15.5px;color:rgba(255,255,255,.46);line-height:20px;letter-spacing:-0.248px;">Go to Settings to activate Windows.</div>
</div>
<div style="position:absolute;left:0;top:0;width:1920px;height:1039px;clip-path:polygon(339px 54px,1763px 54px,1763px 966px,339px 966px);pointer-events:none">
<div class="t" style="left:1599px;top:945.07px;font-size:20px;color:rgba(120,120,120,.42);line-height:26px;letter-spacing:-0.115px;">Activate Windows</div>
<div class="t" style="left:1599px;top:971.13px;font-size:15.5px;color:rgba(120,120,120,.42);line-height:20px;letter-spacing:-0.248px;">Go to Settings to activate Windows.</div>
</div>
<svg style="position:absolute;left:907px;top:688px;" width="14" height="21" viewBox="0 0 14 21"><path d="M1 1v15.500l3.600-3.400 2.700 6.200 2.300-1-2.700-6.100h5z" fill="#fff" stroke="#000" stroke-width="1" stroke-linejoin="miter"/></svg>
</div>
</body></html>
